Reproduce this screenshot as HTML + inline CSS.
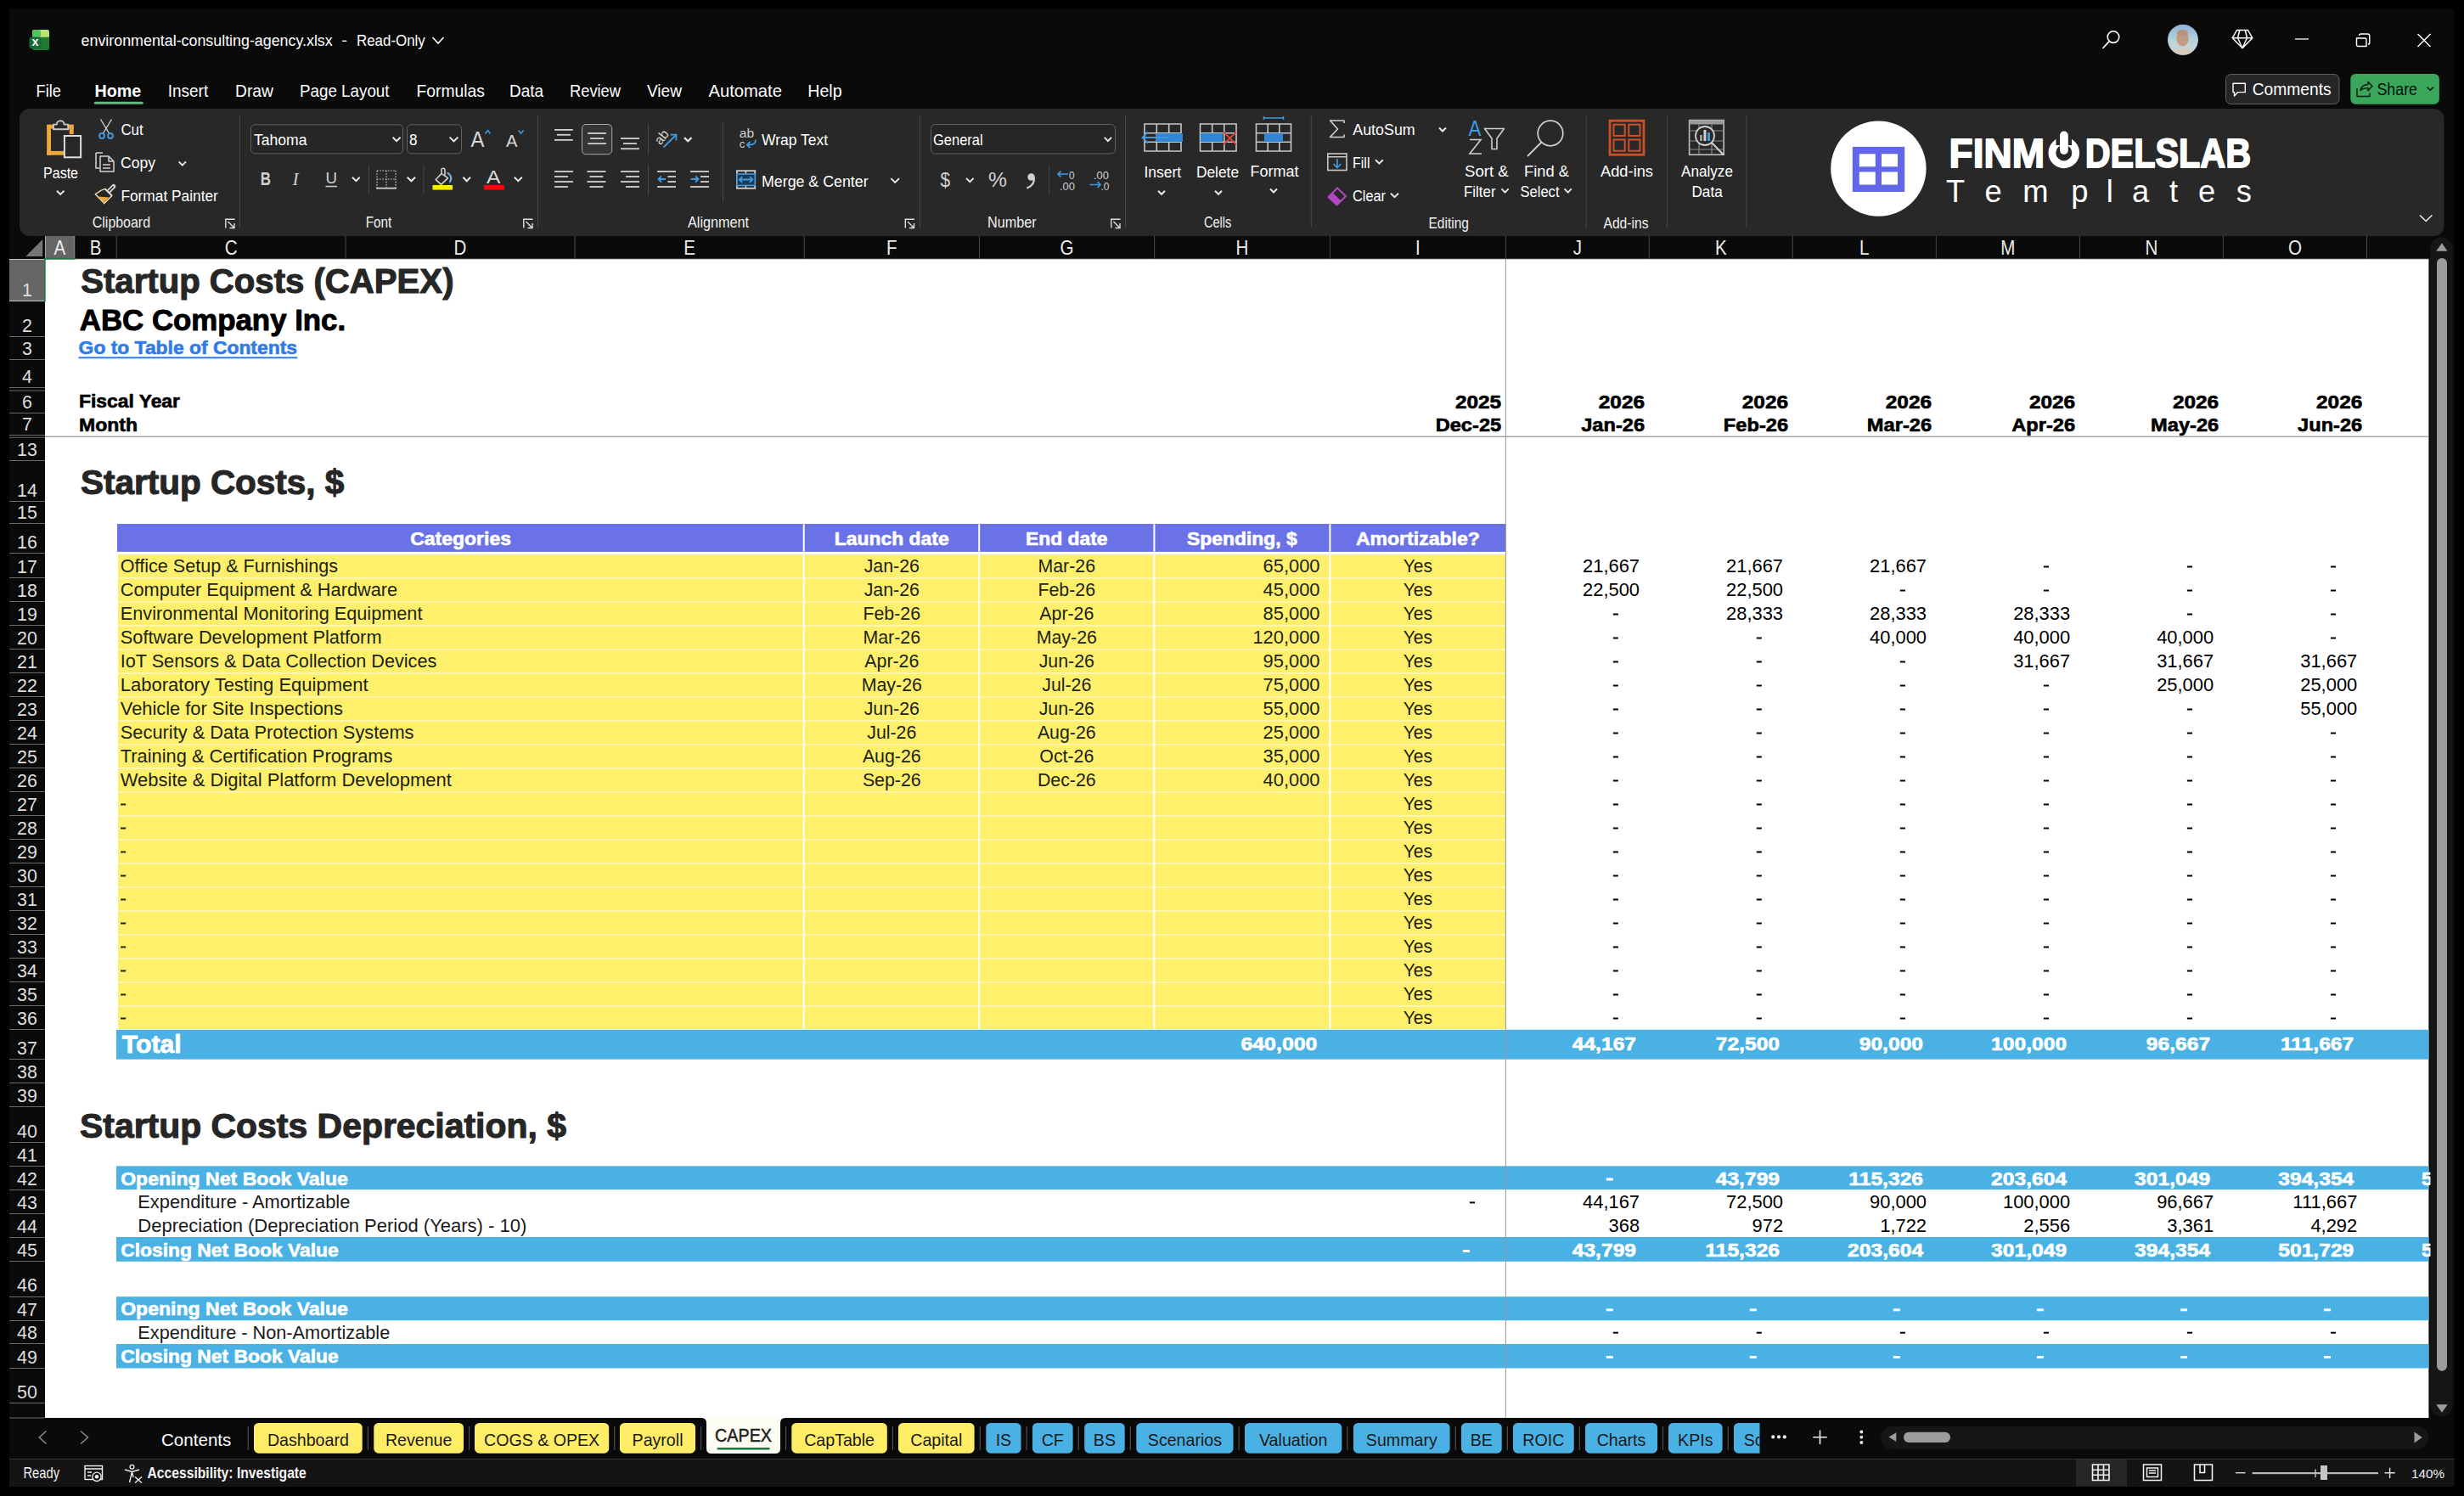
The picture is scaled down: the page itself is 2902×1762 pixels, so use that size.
<!DOCTYPE html><html><head><meta charset="utf-8"><title>CAPEX</title><style>html,body{margin:0;padding:0;background:#000;overflow:hidden}svg{display:block}</style></head><body><svg width="2902" height="1762" viewBox="0 0 2902 1762" font-family="Liberation Sans, sans-serif">
<rect x="0.00" y="0.00" width="2902.00" height="1762.00" fill="#000"/>
<rect x="11.00" y="11.00" width="2879.50" height="1740.00" fill="#0a0a0a"/>
<rect x="53.00" y="305.00" width="2807.40" height="1365.00" fill="#fff"/>
<text x="95.20" y="345.00" font-size="40.41" font-weight="bold" fill="#262626" textLength="439.33" lengthAdjust="spacingAndGlyphs" stroke="#262626" stroke-width="1.13" stroke-linejoin="round">Startup Costs (CAPEX)</text>
<text x="93.80" y="388.70" font-size="35.17" font-weight="bold" fill="#000" textLength="313.34" lengthAdjust="spacingAndGlyphs" stroke="#000" stroke-width="0.98" stroke-linejoin="round">ABC Company Inc.</text>
<text x="92.60" y="417.30" font-size="22.09" font-weight="bold" fill="#2f7be8" textLength="257.37" lengthAdjust="spacingAndGlyphs" stroke="#2f7be8" stroke-width="0.62" stroke-linejoin="round">Go to Table of Contents</text>
<rect x="92.60" y="420.30" width="257.60" height="2.00" fill="#2f7be8"/>
<text x="93.00" y="480.20" font-size="22.09" font-weight="bold" fill="#000" textLength="118.96" lengthAdjust="spacingAndGlyphs" stroke="#000" stroke-width="0.62" stroke-linejoin="round">Fiscal Year</text>
<text x="93.00" y="508.40" font-size="22.09" font-weight="bold" fill="#000" textLength="68.97" lengthAdjust="spacingAndGlyphs" stroke="#000" stroke-width="0.62" stroke-linejoin="round">Month</text>
<text x="1768.19" y="480.60" font-size="22.09" font-weight="bold" fill="#000" text-anchor="end" textLength="54.29" lengthAdjust="spacingAndGlyphs" stroke="#000" stroke-width="0.62" stroke-linejoin="round">2025</text>
<text x="1768.20" y="508.40" font-size="22.09" font-weight="bold" fill="#000" text-anchor="end" textLength="77.54" lengthAdjust="spacingAndGlyphs" stroke="#000" stroke-width="0.62" stroke-linejoin="round">Dec-25</text>
<text x="1937.09" y="480.60" font-size="22.09" font-weight="bold" fill="#000" text-anchor="end" textLength="54.29" lengthAdjust="spacingAndGlyphs" stroke="#000" stroke-width="0.62" stroke-linejoin="round">2026</text>
<text x="1937.07" y="508.40" font-size="22.09" font-weight="bold" fill="#000" text-anchor="end" textLength="74.90" lengthAdjust="spacingAndGlyphs" stroke="#000" stroke-width="0.62" stroke-linejoin="round">Jan-26</text>
<text x="2106.09" y="480.60" font-size="22.09" font-weight="bold" fill="#000" text-anchor="end" textLength="54.29" lengthAdjust="spacingAndGlyphs" stroke="#000" stroke-width="0.62" stroke-linejoin="round">2026</text>
<text x="2106.06" y="508.40" font-size="22.09" font-weight="bold" fill="#000" text-anchor="end" textLength="76.20" lengthAdjust="spacingAndGlyphs" stroke="#000" stroke-width="0.62" stroke-linejoin="round">Feb-26</text>
<text x="2275.09" y="480.60" font-size="22.09" font-weight="bold" fill="#000" text-anchor="end" textLength="54.29" lengthAdjust="spacingAndGlyphs" stroke="#000" stroke-width="0.62" stroke-linejoin="round">2026</text>
<text x="2275.07" y="508.40" font-size="22.09" font-weight="bold" fill="#000" text-anchor="end" textLength="76.21" lengthAdjust="spacingAndGlyphs" stroke="#000" stroke-width="0.62" stroke-linejoin="round">Mar-26</text>
<text x="2444.19" y="480.60" font-size="22.09" font-weight="bold" fill="#000" text-anchor="end" textLength="54.29" lengthAdjust="spacingAndGlyphs" stroke="#000" stroke-width="0.62" stroke-linejoin="round">2026</text>
<text x="2444.14" y="508.40" font-size="22.09" font-weight="bold" fill="#000" text-anchor="end" textLength="74.88" lengthAdjust="spacingAndGlyphs" stroke="#000" stroke-width="0.62" stroke-linejoin="round">Apr-26</text>
<text x="2613.19" y="480.60" font-size="22.09" font-weight="bold" fill="#000" text-anchor="end" textLength="54.29" lengthAdjust="spacingAndGlyphs" stroke="#000" stroke-width="0.62" stroke-linejoin="round">2026</text>
<text x="2613.22" y="508.40" font-size="22.09" font-weight="bold" fill="#000" text-anchor="end" textLength="80.16" lengthAdjust="spacingAndGlyphs" stroke="#000" stroke-width="0.62" stroke-linejoin="round">May-26</text>
<text x="2782.29" y="480.60" font-size="22.09" font-weight="bold" fill="#000" text-anchor="end" textLength="54.29" lengthAdjust="spacingAndGlyphs" stroke="#000" stroke-width="0.62" stroke-linejoin="round">2026</text>
<text x="2782.26" y="508.40" font-size="22.09" font-weight="bold" fill="#000" text-anchor="end" textLength="76.20" lengthAdjust="spacingAndGlyphs" stroke="#000" stroke-width="0.62" stroke-linejoin="round">Jun-26</text>
<rect x="53.00" y="513.60" width="2807.40" height="1.30" fill="#9a9a9a"/>
<text x="95.00" y="582.30" font-size="40.41" font-weight="bold" fill="#262626" textLength="310.33" lengthAdjust="spacingAndGlyphs" stroke="#262626" stroke-width="1.13" stroke-linejoin="round">Startup Costs, $</text>
<rect x="138.00" y="617.00" width="1635.40" height="32.90" fill="#6b72e6"/>
<rect x="945.70" y="617.20" width="2.00" height="32.60" fill="#fff"/>
<rect x="1152.20" y="617.20" width="2.00" height="32.60" fill="#fff"/>
<rect x="1358.40" y="617.20" width="2.00" height="32.60" fill="#fff"/>
<rect x="1565.40" y="617.20" width="2.00" height="32.60" fill="#fff"/>
<text x="483.20" y="641.60" font-size="21.80" font-weight="bold" fill="#fff" textLength="118.77" lengthAdjust="spacingAndGlyphs" stroke="#fff" stroke-width="0.61" stroke-linejoin="round">Categories</text>
<text x="982.88" y="641.60" font-size="21.80" font-weight="bold" fill="#fff" textLength="134.83" lengthAdjust="spacingAndGlyphs" stroke="#fff" stroke-width="0.61" stroke-linejoin="round">Launch date</text>
<text x="1207.94" y="641.60" font-size="21.80" font-weight="bold" fill="#fff" textLength="96.67" lengthAdjust="spacingAndGlyphs" stroke="#fff" stroke-width="0.61" stroke-linejoin="round">End date</text>
<text x="1398.06" y="641.60" font-size="21.80" font-weight="bold" fill="#fff" textLength="129.73" lengthAdjust="spacingAndGlyphs" stroke="#fff" stroke-width="0.61" stroke-linejoin="round">Spending, $</text>
<text x="1596.90" y="641.60" font-size="21.80" font-weight="bold" fill="#fff" textLength="145.98" lengthAdjust="spacingAndGlyphs" stroke="#fff" stroke-width="0.61" stroke-linejoin="round">Amortizable?</text>
<rect x="139.00" y="653.00" width="1634.40" height="559.00" fill="#fff06b"/>
<rect x="139.00" y="680.30" width="1634.40" height="1.40" fill="#fff8c4"/>
<rect x="139.00" y="708.30" width="1634.40" height="1.40" fill="#fff8c4"/>
<rect x="139.00" y="736.30" width="1634.40" height="1.40" fill="#fff8c4"/>
<rect x="139.00" y="764.30" width="1634.40" height="1.40" fill="#fff8c4"/>
<rect x="139.00" y="792.30" width="1634.40" height="1.40" fill="#fff8c4"/>
<rect x="139.00" y="820.30" width="1634.40" height="1.40" fill="#fff8c4"/>
<rect x="139.00" y="848.30" width="1634.40" height="1.40" fill="#fff8c4"/>
<rect x="139.00" y="876.30" width="1634.40" height="1.40" fill="#fff8c4"/>
<rect x="139.00" y="904.30" width="1634.40" height="1.40" fill="#fff8c4"/>
<rect x="139.00" y="932.30" width="1634.40" height="1.40" fill="#fff8c4"/>
<rect x="139.00" y="960.30" width="1634.40" height="1.40" fill="#fff8c4"/>
<rect x="139.00" y="988.30" width="1634.40" height="1.40" fill="#fff8c4"/>
<rect x="139.00" y="1016.30" width="1634.40" height="1.40" fill="#fff8c4"/>
<rect x="139.00" y="1044.30" width="1634.40" height="1.40" fill="#fff8c4"/>
<rect x="139.00" y="1072.30" width="1634.40" height="1.40" fill="#fff8c4"/>
<rect x="139.00" y="1100.30" width="1634.40" height="1.40" fill="#fff8c4"/>
<rect x="139.00" y="1128.30" width="1634.40" height="1.40" fill="#fff8c4"/>
<rect x="139.00" y="1156.30" width="1634.40" height="1.40" fill="#fff8c4"/>
<rect x="139.00" y="1184.30" width="1634.40" height="1.40" fill="#fff8c4"/>
<rect x="945.70" y="653.00" width="2.00" height="559.00" fill="#fff"/>
<rect x="1152.20" y="653.00" width="2.00" height="559.00" fill="#fff"/>
<rect x="1358.40" y="653.00" width="2.00" height="559.00" fill="#fff"/>
<rect x="1565.40" y="653.00" width="2.00" height="559.00" fill="#fff"/>
<text x="141.80" y="673.80" font-size="22.09" fill="#1c2418" textLength="256.34" lengthAdjust="spacingAndGlyphs">Office Setup &amp; Furnishings</text>
<text x="1017.65" y="673.80" font-size="22.09" fill="#1c2418" textLength="65.26" lengthAdjust="spacingAndGlyphs">Jan-26</text>
<text x="1222.47" y="673.80" font-size="22.09" fill="#1c2418" textLength="67.60" lengthAdjust="spacingAndGlyphs">Mar-26</text>
<text x="1554.47" y="673.80" font-size="22.09" fill="#1c2418" text-anchor="end" textLength="66.90" lengthAdjust="spacingAndGlyphs">65,000</text>
<text x="1652.75" y="673.80" font-size="22.09" fill="#1c2418" textLength="34.33" lengthAdjust="spacingAndGlyphs">Yes</text>
<text x="141.80" y="701.80" font-size="22.09" fill="#1c2418" textLength="326.35" lengthAdjust="spacingAndGlyphs">Computer Equipment &amp; Hardware</text>
<text x="1017.65" y="701.80" font-size="22.09" fill="#1c2418" textLength="65.26" lengthAdjust="spacingAndGlyphs">Jan-26</text>
<text x="1222.47" y="701.80" font-size="22.09" fill="#1c2418" textLength="67.62" lengthAdjust="spacingAndGlyphs">Feb-26</text>
<text x="1554.47" y="701.80" font-size="22.09" fill="#1c2418" text-anchor="end" textLength="66.90" lengthAdjust="spacingAndGlyphs">45,000</text>
<text x="1652.75" y="701.80" font-size="22.09" fill="#1c2418" textLength="34.33" lengthAdjust="spacingAndGlyphs">Yes</text>
<text x="141.80" y="729.80" font-size="22.09" fill="#1c2418" textLength="355.66" lengthAdjust="spacingAndGlyphs">Environmental Monitoring Equipment</text>
<text x="1016.47" y="729.80" font-size="22.09" fill="#1c2418" textLength="67.62" lengthAdjust="spacingAndGlyphs">Feb-26</text>
<text x="1224.29" y="729.80" font-size="22.09" fill="#1c2418" textLength="64.06" lengthAdjust="spacingAndGlyphs">Apr-26</text>
<text x="1554.47" y="729.80" font-size="22.09" fill="#1c2418" text-anchor="end" textLength="66.90" lengthAdjust="spacingAndGlyphs">85,000</text>
<text x="1652.75" y="729.80" font-size="22.09" fill="#1c2418" textLength="34.33" lengthAdjust="spacingAndGlyphs">Yes</text>
<text x="141.80" y="757.80" font-size="22.09" fill="#1c2418" textLength="307.75" lengthAdjust="spacingAndGlyphs">Software Development Platform</text>
<text x="1016.47" y="757.80" font-size="22.09" fill="#1c2418" textLength="67.60" lengthAdjust="spacingAndGlyphs">Mar-26</text>
<text x="1220.71" y="757.80" font-size="22.09" fill="#1c2418" textLength="71.17" lengthAdjust="spacingAndGlyphs">May-26</text>
<text x="1554.50" y="757.80" font-size="22.09" fill="#1c2418" text-anchor="end" textLength="79.06" lengthAdjust="spacingAndGlyphs">120,000</text>
<text x="1652.75" y="757.80" font-size="22.09" fill="#1c2418" textLength="34.33" lengthAdjust="spacingAndGlyphs">Yes</text>
<text x="141.80" y="785.80" font-size="22.09" fill="#1c2418" textLength="372.44" lengthAdjust="spacingAndGlyphs">IoT Sensors &amp; Data Collection Devices</text>
<text x="1018.29" y="785.80" font-size="22.09" fill="#1c2418" textLength="64.06" lengthAdjust="spacingAndGlyphs">Apr-26</text>
<text x="1223.65" y="785.80" font-size="22.09" fill="#1c2418" textLength="65.26" lengthAdjust="spacingAndGlyphs">Jun-26</text>
<text x="1554.47" y="785.80" font-size="22.09" fill="#1c2418" text-anchor="end" textLength="66.90" lengthAdjust="spacingAndGlyphs">95,000</text>
<text x="1652.75" y="785.80" font-size="22.09" fill="#1c2418" textLength="34.33" lengthAdjust="spacingAndGlyphs">Yes</text>
<text x="141.80" y="813.80" font-size="22.09" fill="#1c2418" textLength="291.76" lengthAdjust="spacingAndGlyphs">Laboratory Testing Equipment</text>
<text x="1014.71" y="813.80" font-size="22.09" fill="#1c2418" textLength="71.17" lengthAdjust="spacingAndGlyphs">May-26</text>
<text x="1227.22" y="813.80" font-size="22.09" fill="#1c2418" textLength="58.13" lengthAdjust="spacingAndGlyphs">Jul-26</text>
<text x="1554.47" y="813.80" font-size="22.09" fill="#1c2418" text-anchor="end" textLength="66.90" lengthAdjust="spacingAndGlyphs">75,000</text>
<text x="1652.75" y="813.80" font-size="22.09" fill="#1c2418" textLength="34.33" lengthAdjust="spacingAndGlyphs">Yes</text>
<text x="141.80" y="841.80" font-size="22.09" fill="#1c2418" textLength="262.09" lengthAdjust="spacingAndGlyphs">Vehicle for Site Inspections</text>
<text x="1017.65" y="841.80" font-size="22.09" fill="#1c2418" textLength="65.26" lengthAdjust="spacingAndGlyphs">Jun-26</text>
<text x="1223.65" y="841.80" font-size="22.09" fill="#1c2418" textLength="65.26" lengthAdjust="spacingAndGlyphs">Jun-26</text>
<text x="1554.47" y="841.80" font-size="22.09" fill="#1c2418" text-anchor="end" textLength="66.90" lengthAdjust="spacingAndGlyphs">55,000</text>
<text x="1652.75" y="841.80" font-size="22.09" fill="#1c2418" textLength="34.33" lengthAdjust="spacingAndGlyphs">Yes</text>
<text x="141.80" y="869.80" font-size="22.09" fill="#1c2418" textLength="345.75" lengthAdjust="spacingAndGlyphs">Security &amp; Data Protection Systems</text>
<text x="1021.22" y="869.80" font-size="22.09" fill="#1c2418" textLength="58.13" lengthAdjust="spacingAndGlyphs">Jul-26</text>
<text x="1221.89" y="869.80" font-size="22.09" fill="#1c2418" textLength="68.82" lengthAdjust="spacingAndGlyphs">Aug-26</text>
<text x="1554.47" y="869.80" font-size="22.09" fill="#1c2418" text-anchor="end" textLength="66.90" lengthAdjust="spacingAndGlyphs">25,000</text>
<text x="1652.75" y="869.80" font-size="22.09" fill="#1c2418" textLength="34.33" lengthAdjust="spacingAndGlyphs">Yes</text>
<text x="141.80" y="897.80" font-size="22.09" fill="#1c2418" textLength="320.67" lengthAdjust="spacingAndGlyphs">Training &amp; Certification Programs</text>
<text x="1015.89" y="897.80" font-size="22.09" fill="#1c2418" textLength="68.82" lengthAdjust="spacingAndGlyphs">Aug-26</text>
<text x="1224.29" y="897.80" font-size="22.09" fill="#1c2418" textLength="64.05" lengthAdjust="spacingAndGlyphs">Oct-26</text>
<text x="1554.47" y="897.80" font-size="22.09" fill="#1c2418" text-anchor="end" textLength="66.90" lengthAdjust="spacingAndGlyphs">35,000</text>
<text x="1652.75" y="897.80" font-size="22.09" fill="#1c2418" textLength="34.33" lengthAdjust="spacingAndGlyphs">Yes</text>
<text x="141.80" y="925.80" font-size="22.09" fill="#1c2418" textLength="390.04" lengthAdjust="spacingAndGlyphs">Website &amp; Digital Platform Development</text>
<text x="1015.89" y="925.80" font-size="22.09" fill="#1c2418" textLength="68.82" lengthAdjust="spacingAndGlyphs">Sep-26</text>
<text x="1221.89" y="925.80" font-size="22.09" fill="#1c2418" textLength="68.80" lengthAdjust="spacingAndGlyphs">Dec-26</text>
<text x="1554.47" y="925.80" font-size="22.09" fill="#1c2418" text-anchor="end" textLength="66.90" lengthAdjust="spacingAndGlyphs">40,000</text>
<text x="1652.75" y="925.80" font-size="22.09" fill="#1c2418" textLength="34.33" lengthAdjust="spacingAndGlyphs">Yes</text>
<rect x="142.00" y="946.50" width="6.20" height="2.00" fill="#1c2418"/>
<text x="1652.75" y="953.80" font-size="22.09" fill="#1c2418" textLength="34.33" lengthAdjust="spacingAndGlyphs">Yes</text>
<rect x="142.00" y="974.50" width="6.20" height="2.00" fill="#1c2418"/>
<text x="1652.75" y="981.80" font-size="22.09" fill="#1c2418" textLength="34.33" lengthAdjust="spacingAndGlyphs">Yes</text>
<rect x="142.00" y="1002.50" width="6.20" height="2.00" fill="#1c2418"/>
<text x="1652.75" y="1009.80" font-size="22.09" fill="#1c2418" textLength="34.33" lengthAdjust="spacingAndGlyphs">Yes</text>
<rect x="142.00" y="1030.50" width="6.20" height="2.00" fill="#1c2418"/>
<text x="1652.75" y="1037.80" font-size="22.09" fill="#1c2418" textLength="34.33" lengthAdjust="spacingAndGlyphs">Yes</text>
<rect x="142.00" y="1058.50" width="6.20" height="2.00" fill="#1c2418"/>
<text x="1652.75" y="1065.80" font-size="22.09" fill="#1c2418" textLength="34.33" lengthAdjust="spacingAndGlyphs">Yes</text>
<rect x="142.00" y="1086.50" width="6.20" height="2.00" fill="#1c2418"/>
<text x="1652.75" y="1093.80" font-size="22.09" fill="#1c2418" textLength="34.33" lengthAdjust="spacingAndGlyphs">Yes</text>
<rect x="142.00" y="1114.50" width="6.20" height="2.00" fill="#1c2418"/>
<text x="1652.75" y="1121.80" font-size="22.09" fill="#1c2418" textLength="34.33" lengthAdjust="spacingAndGlyphs">Yes</text>
<rect x="142.00" y="1142.50" width="6.20" height="2.00" fill="#1c2418"/>
<text x="1652.75" y="1149.80" font-size="22.09" fill="#1c2418" textLength="34.33" lengthAdjust="spacingAndGlyphs">Yes</text>
<rect x="142.00" y="1170.50" width="6.20" height="2.00" fill="#1c2418"/>
<text x="1652.75" y="1177.80" font-size="22.09" fill="#1c2418" textLength="34.33" lengthAdjust="spacingAndGlyphs">Yes</text>
<rect x="142.00" y="1198.50" width="6.20" height="2.00" fill="#1c2418"/>
<text x="1652.75" y="1205.80" font-size="22.09" fill="#1c2418" textLength="34.33" lengthAdjust="spacingAndGlyphs">Yes</text>
<text x="1931.07" y="673.80" font-size="22.09" fill="#000" text-anchor="end" textLength="67.03" lengthAdjust="spacingAndGlyphs">21,667</text>
<text x="2100.07" y="673.80" font-size="22.09" fill="#000" text-anchor="end" textLength="67.03" lengthAdjust="spacingAndGlyphs">21,667</text>
<text x="2269.07" y="673.80" font-size="22.09" fill="#000" text-anchor="end" textLength="67.03" lengthAdjust="spacingAndGlyphs">21,667</text>
<rect x="2406.90" y="666.50" width="6.10" height="2.00" fill="#000"/>
<rect x="2575.90" y="666.50" width="6.10" height="2.00" fill="#000"/>
<rect x="2745.00" y="666.50" width="6.10" height="2.00" fill="#000"/>
<text x="1931.07" y="701.80" font-size="22.09" fill="#000" text-anchor="end" textLength="67.03" lengthAdjust="spacingAndGlyphs">22,500</text>
<text x="2100.07" y="701.80" font-size="22.09" fill="#000" text-anchor="end" textLength="67.03" lengthAdjust="spacingAndGlyphs">22,500</text>
<rect x="2237.80" y="694.50" width="6.10" height="2.00" fill="#000"/>
<rect x="2406.90" y="694.50" width="6.10" height="2.00" fill="#000"/>
<rect x="2575.90" y="694.50" width="6.10" height="2.00" fill="#000"/>
<rect x="2745.00" y="694.50" width="6.10" height="2.00" fill="#000"/>
<rect x="1899.80" y="722.50" width="6.10" height="2.00" fill="#000"/>
<text x="2100.07" y="729.80" font-size="22.09" fill="#000" text-anchor="end" textLength="67.03" lengthAdjust="spacingAndGlyphs">28,333</text>
<text x="2269.07" y="729.80" font-size="22.09" fill="#000" text-anchor="end" textLength="67.03" lengthAdjust="spacingAndGlyphs">28,333</text>
<text x="2438.17" y="729.80" font-size="22.09" fill="#000" text-anchor="end" textLength="67.03" lengthAdjust="spacingAndGlyphs">28,333</text>
<rect x="2575.90" y="722.50" width="6.10" height="2.00" fill="#000"/>
<rect x="2745.00" y="722.50" width="6.10" height="2.00" fill="#000"/>
<rect x="1899.80" y="750.50" width="6.10" height="2.00" fill="#000"/>
<rect x="2068.80" y="750.50" width="6.10" height="2.00" fill="#000"/>
<text x="2269.07" y="757.80" font-size="22.09" fill="#000" text-anchor="end" textLength="67.03" lengthAdjust="spacingAndGlyphs">40,000</text>
<text x="2438.17" y="757.80" font-size="22.09" fill="#000" text-anchor="end" textLength="67.03" lengthAdjust="spacingAndGlyphs">40,000</text>
<text x="2607.17" y="757.80" font-size="22.09" fill="#000" text-anchor="end" textLength="67.03" lengthAdjust="spacingAndGlyphs">40,000</text>
<rect x="2745.00" y="750.50" width="6.10" height="2.00" fill="#000"/>
<rect x="1899.80" y="778.50" width="6.10" height="2.00" fill="#000"/>
<rect x="2068.80" y="778.50" width="6.10" height="2.00" fill="#000"/>
<rect x="2237.80" y="778.50" width="6.10" height="2.00" fill="#000"/>
<text x="2438.17" y="785.80" font-size="22.09" fill="#000" text-anchor="end" textLength="67.03" lengthAdjust="spacingAndGlyphs">31,667</text>
<text x="2607.17" y="785.80" font-size="22.09" fill="#000" text-anchor="end" textLength="67.03" lengthAdjust="spacingAndGlyphs">31,667</text>
<text x="2776.27" y="785.80" font-size="22.09" fill="#000" text-anchor="end" textLength="67.03" lengthAdjust="spacingAndGlyphs">31,667</text>
<rect x="1899.80" y="806.50" width="6.10" height="2.00" fill="#000"/>
<rect x="2068.80" y="806.50" width="6.10" height="2.00" fill="#000"/>
<rect x="2237.80" y="806.50" width="6.10" height="2.00" fill="#000"/>
<rect x="2406.90" y="806.50" width="6.10" height="2.00" fill="#000"/>
<text x="2607.17" y="813.80" font-size="22.09" fill="#000" text-anchor="end" textLength="67.03" lengthAdjust="spacingAndGlyphs">25,000</text>
<text x="2776.27" y="813.80" font-size="22.09" fill="#000" text-anchor="end" textLength="67.03" lengthAdjust="spacingAndGlyphs">25,000</text>
<rect x="1899.80" y="834.50" width="6.10" height="2.00" fill="#000"/>
<rect x="2068.80" y="834.50" width="6.10" height="2.00" fill="#000"/>
<rect x="2237.80" y="834.50" width="6.10" height="2.00" fill="#000"/>
<rect x="2406.90" y="834.50" width="6.10" height="2.00" fill="#000"/>
<rect x="2575.90" y="834.50" width="6.10" height="2.00" fill="#000"/>
<text x="2776.27" y="841.80" font-size="22.09" fill="#000" text-anchor="end" textLength="67.03" lengthAdjust="spacingAndGlyphs">55,000</text>
<rect x="1899.80" y="862.50" width="6.10" height="2.00" fill="#000"/>
<rect x="2068.80" y="862.50" width="6.10" height="2.00" fill="#000"/>
<rect x="2237.80" y="862.50" width="6.10" height="2.00" fill="#000"/>
<rect x="2406.90" y="862.50" width="6.10" height="2.00" fill="#000"/>
<rect x="2575.90" y="862.50" width="6.10" height="2.00" fill="#000"/>
<rect x="2745.00" y="862.50" width="6.10" height="2.00" fill="#000"/>
<rect x="1899.80" y="890.50" width="6.10" height="2.00" fill="#000"/>
<rect x="2068.80" y="890.50" width="6.10" height="2.00" fill="#000"/>
<rect x="2237.80" y="890.50" width="6.10" height="2.00" fill="#000"/>
<rect x="2406.90" y="890.50" width="6.10" height="2.00" fill="#000"/>
<rect x="2575.90" y="890.50" width="6.10" height="2.00" fill="#000"/>
<rect x="2745.00" y="890.50" width="6.10" height="2.00" fill="#000"/>
<rect x="1899.80" y="918.50" width="6.10" height="2.00" fill="#000"/>
<rect x="2068.80" y="918.50" width="6.10" height="2.00" fill="#000"/>
<rect x="2237.80" y="918.50" width="6.10" height="2.00" fill="#000"/>
<rect x="2406.90" y="918.50" width="6.10" height="2.00" fill="#000"/>
<rect x="2575.90" y="918.50" width="6.10" height="2.00" fill="#000"/>
<rect x="2745.00" y="918.50" width="6.10" height="2.00" fill="#000"/>
<rect x="1899.80" y="946.50" width="6.10" height="2.00" fill="#000"/>
<rect x="2068.80" y="946.50" width="6.10" height="2.00" fill="#000"/>
<rect x="2237.80" y="946.50" width="6.10" height="2.00" fill="#000"/>
<rect x="2406.90" y="946.50" width="6.10" height="2.00" fill="#000"/>
<rect x="2575.90" y="946.50" width="6.10" height="2.00" fill="#000"/>
<rect x="2745.00" y="946.50" width="6.10" height="2.00" fill="#000"/>
<rect x="1899.80" y="974.50" width="6.10" height="2.00" fill="#000"/>
<rect x="2068.80" y="974.50" width="6.10" height="2.00" fill="#000"/>
<rect x="2237.80" y="974.50" width="6.10" height="2.00" fill="#000"/>
<rect x="2406.90" y="974.50" width="6.10" height="2.00" fill="#000"/>
<rect x="2575.90" y="974.50" width="6.10" height="2.00" fill="#000"/>
<rect x="2745.00" y="974.50" width="6.10" height="2.00" fill="#000"/>
<rect x="1899.80" y="1002.50" width="6.10" height="2.00" fill="#000"/>
<rect x="2068.80" y="1002.50" width="6.10" height="2.00" fill="#000"/>
<rect x="2237.80" y="1002.50" width="6.10" height="2.00" fill="#000"/>
<rect x="2406.90" y="1002.50" width="6.10" height="2.00" fill="#000"/>
<rect x="2575.90" y="1002.50" width="6.10" height="2.00" fill="#000"/>
<rect x="2745.00" y="1002.50" width="6.10" height="2.00" fill="#000"/>
<rect x="1899.80" y="1030.50" width="6.10" height="2.00" fill="#000"/>
<rect x="2068.80" y="1030.50" width="6.10" height="2.00" fill="#000"/>
<rect x="2237.80" y="1030.50" width="6.10" height="2.00" fill="#000"/>
<rect x="2406.90" y="1030.50" width="6.10" height="2.00" fill="#000"/>
<rect x="2575.90" y="1030.50" width="6.10" height="2.00" fill="#000"/>
<rect x="2745.00" y="1030.50" width="6.10" height="2.00" fill="#000"/>
<rect x="1899.80" y="1058.50" width="6.10" height="2.00" fill="#000"/>
<rect x="2068.80" y="1058.50" width="6.10" height="2.00" fill="#000"/>
<rect x="2237.80" y="1058.50" width="6.10" height="2.00" fill="#000"/>
<rect x="2406.90" y="1058.50" width="6.10" height="2.00" fill="#000"/>
<rect x="2575.90" y="1058.50" width="6.10" height="2.00" fill="#000"/>
<rect x="2745.00" y="1058.50" width="6.10" height="2.00" fill="#000"/>
<rect x="1899.80" y="1086.50" width="6.10" height="2.00" fill="#000"/>
<rect x="2068.80" y="1086.50" width="6.10" height="2.00" fill="#000"/>
<rect x="2237.80" y="1086.50" width="6.10" height="2.00" fill="#000"/>
<rect x="2406.90" y="1086.50" width="6.10" height="2.00" fill="#000"/>
<rect x="2575.90" y="1086.50" width="6.10" height="2.00" fill="#000"/>
<rect x="2745.00" y="1086.50" width="6.10" height="2.00" fill="#000"/>
<rect x="1899.80" y="1114.50" width="6.10" height="2.00" fill="#000"/>
<rect x="2068.80" y="1114.50" width="6.10" height="2.00" fill="#000"/>
<rect x="2237.80" y="1114.50" width="6.10" height="2.00" fill="#000"/>
<rect x="2406.90" y="1114.50" width="6.10" height="2.00" fill="#000"/>
<rect x="2575.90" y="1114.50" width="6.10" height="2.00" fill="#000"/>
<rect x="2745.00" y="1114.50" width="6.10" height="2.00" fill="#000"/>
<rect x="1899.80" y="1142.50" width="6.10" height="2.00" fill="#000"/>
<rect x="2068.80" y="1142.50" width="6.10" height="2.00" fill="#000"/>
<rect x="2237.80" y="1142.50" width="6.10" height="2.00" fill="#000"/>
<rect x="2406.90" y="1142.50" width="6.10" height="2.00" fill="#000"/>
<rect x="2575.90" y="1142.50" width="6.10" height="2.00" fill="#000"/>
<rect x="2745.00" y="1142.50" width="6.10" height="2.00" fill="#000"/>
<rect x="1899.80" y="1170.50" width="6.10" height="2.00" fill="#000"/>
<rect x="2068.80" y="1170.50" width="6.10" height="2.00" fill="#000"/>
<rect x="2237.80" y="1170.50" width="6.10" height="2.00" fill="#000"/>
<rect x="2406.90" y="1170.50" width="6.10" height="2.00" fill="#000"/>
<rect x="2575.90" y="1170.50" width="6.10" height="2.00" fill="#000"/>
<rect x="2745.00" y="1170.50" width="6.10" height="2.00" fill="#000"/>
<rect x="1899.80" y="1198.50" width="6.10" height="2.00" fill="#000"/>
<rect x="2068.80" y="1198.50" width="6.10" height="2.00" fill="#000"/>
<rect x="2237.80" y="1198.50" width="6.10" height="2.00" fill="#000"/>
<rect x="2406.90" y="1198.50" width="6.10" height="2.00" fill="#000"/>
<rect x="2575.90" y="1198.50" width="6.10" height="2.00" fill="#000"/>
<rect x="2745.00" y="1198.50" width="6.10" height="2.00" fill="#000"/>
<rect x="137.00" y="1212.80" width="2723.40" height="34.90" fill="#4ab1e5"/>
<text x="143.80" y="1239.70" font-size="28.78" font-weight="bold" fill="#fff" textLength="69.79" lengthAdjust="spacingAndGlyphs" stroke="#fff" stroke-width="0.81" stroke-linejoin="round">Total</text>
<text x="1551.50" y="1237.00" font-size="21.80" font-weight="bold" fill="#fff" text-anchor="end" textLength="90.10" lengthAdjust="spacingAndGlyphs" stroke="#fff" stroke-width="0.61" stroke-linejoin="round">640,000</text>
<text x="1927.07" y="1237.00" font-size="21.80" font-weight="bold" fill="#fff" text-anchor="end" textLength="75.36" lengthAdjust="spacingAndGlyphs" stroke="#fff" stroke-width="0.61" stroke-linejoin="round">44,167</text>
<text x="2096.07" y="1237.00" font-size="21.80" font-weight="bold" fill="#fff" text-anchor="end" textLength="75.36" lengthAdjust="spacingAndGlyphs" stroke="#fff" stroke-width="0.61" stroke-linejoin="round">72,500</text>
<text x="2265.07" y="1237.00" font-size="21.80" font-weight="bold" fill="#fff" text-anchor="end" textLength="75.36" lengthAdjust="spacingAndGlyphs" stroke="#fff" stroke-width="0.61" stroke-linejoin="round">90,000</text>
<text x="2434.20" y="1237.00" font-size="21.80" font-weight="bold" fill="#fff" text-anchor="end" textLength="89.06" lengthAdjust="spacingAndGlyphs" stroke="#fff" stroke-width="0.61" stroke-linejoin="round">100,000</text>
<text x="2603.17" y="1237.00" font-size="21.80" font-weight="bold" fill="#fff" text-anchor="end" textLength="75.36" lengthAdjust="spacingAndGlyphs" stroke="#fff" stroke-width="0.61" stroke-linejoin="round">96,667</text>
<text x="2772.29" y="1237.00" font-size="21.80" font-weight="bold" fill="#fff" text-anchor="end" textLength="86.34" lengthAdjust="spacingAndGlyphs" stroke="#fff" stroke-width="0.61" stroke-linejoin="round">111,667</text>
<text x="94.00" y="1340.00" font-size="40.41" font-weight="bold" fill="#262626" textLength="572.93" lengthAdjust="spacingAndGlyphs" stroke="#262626" stroke-width="1.13" stroke-linejoin="round">Startup Costs Depreciation, $</text>
<rect x="137.00" y="1373.40" width="2723.40" height="27.60" fill="#4ab1e5"/>
<rect x="137.00" y="1457.00" width="2723.40" height="28.80" fill="#4ab1e5"/>
<rect x="137.00" y="1527.20" width="2723.40" height="28.00" fill="#4ab1e5"/>
<rect x="137.00" y="1583.00" width="2723.40" height="28.50" fill="#4ab1e5"/>
<text x="142.20" y="1395.50" font-size="21.80" font-weight="bold" fill="#fff" textLength="267.75" lengthAdjust="spacingAndGlyphs" stroke="#fff" stroke-width="0.61" stroke-linejoin="round">Opening Net Book Value</text>
<rect x="1891.80" y="1387.50" width="8.00" height="3.00" fill="#fff"/>
<text x="2096.07" y="1395.50" font-size="21.80" font-weight="bold" fill="#fff" text-anchor="end" textLength="75.36" lengthAdjust="spacingAndGlyphs" stroke="#fff" stroke-width="0.61" stroke-linejoin="round">43,799</text>
<text x="2265.09" y="1395.50" font-size="21.80" font-weight="bold" fill="#fff" text-anchor="end" textLength="87.70" lengthAdjust="spacingAndGlyphs" stroke="#fff" stroke-width="0.61" stroke-linejoin="round">115,326</text>
<text x="2434.20" y="1395.50" font-size="21.80" font-weight="bold" fill="#fff" text-anchor="end" textLength="89.06" lengthAdjust="spacingAndGlyphs" stroke="#fff" stroke-width="0.61" stroke-linejoin="round">203,604</text>
<text x="2603.20" y="1395.50" font-size="21.80" font-weight="bold" fill="#fff" text-anchor="end" textLength="89.06" lengthAdjust="spacingAndGlyphs" stroke="#fff" stroke-width="0.61" stroke-linejoin="round">301,049</text>
<text x="2772.30" y="1395.50" font-size="21.80" font-weight="bold" fill="#fff" text-anchor="end" textLength="89.06" lengthAdjust="spacingAndGlyphs" stroke="#fff" stroke-width="0.61" stroke-linejoin="round">394,354</text>
<text x="2852.00" y="1395.50" font-size="21.80" font-weight="bold" fill="#fff" textLength="13.34" lengthAdjust="spacingAndGlyphs" stroke="#fff" stroke-width="0.61" stroke-linejoin="round">5</text>
<text x="162.30" y="1422.90" font-size="22.09" fill="#1a1a1a" textLength="250.01" lengthAdjust="spacingAndGlyphs">Expenditure - Amortizable</text>
<rect x="1730.90" y="1415.40" width="6.10" height="2.00" fill="#000"/>
<text x="1931.07" y="1422.70" font-size="22.09" fill="#000" text-anchor="end" textLength="67.03" lengthAdjust="spacingAndGlyphs">44,167</text>
<text x="2100.07" y="1422.70" font-size="22.09" fill="#000" text-anchor="end" textLength="67.03" lengthAdjust="spacingAndGlyphs">72,500</text>
<text x="2269.07" y="1422.70" font-size="22.09" fill="#000" text-anchor="end" textLength="67.03" lengthAdjust="spacingAndGlyphs">90,000</text>
<text x="2438.20" y="1422.70" font-size="22.09" fill="#000" text-anchor="end" textLength="79.22" lengthAdjust="spacingAndGlyphs">100,000</text>
<text x="2607.17" y="1422.70" font-size="22.09" fill="#000" text-anchor="end" textLength="67.03" lengthAdjust="spacingAndGlyphs">96,667</text>
<text x="2776.33" y="1422.70" font-size="22.09" fill="#000" text-anchor="end" textLength="75.97" lengthAdjust="spacingAndGlyphs">111,667</text>
<text x="162.30" y="1451.00" font-size="22.09" fill="#1a1a1a" textLength="458.04" lengthAdjust="spacingAndGlyphs">Depreciation (Depreciation Period (Years) - 10)</text>
<text x="1931.07" y="1451.00" font-size="22.09" fill="#000" text-anchor="end" textLength="36.57" lengthAdjust="spacingAndGlyphs">368</text>
<text x="2100.07" y="1451.00" font-size="22.09" fill="#000" text-anchor="end" textLength="36.57" lengthAdjust="spacingAndGlyphs">972</text>
<text x="2269.05" y="1451.00" font-size="22.09" fill="#000" text-anchor="end" textLength="54.85" lengthAdjust="spacingAndGlyphs">1,722</text>
<text x="2438.15" y="1451.00" font-size="22.09" fill="#000" text-anchor="end" textLength="54.85" lengthAdjust="spacingAndGlyphs">2,556</text>
<text x="2607.15" y="1451.00" font-size="22.09" fill="#000" text-anchor="end" textLength="54.85" lengthAdjust="spacingAndGlyphs">3,361</text>
<text x="2776.25" y="1451.00" font-size="22.09" fill="#000" text-anchor="end" textLength="54.85" lengthAdjust="spacingAndGlyphs">4,292</text>
<text x="142.20" y="1480.00" font-size="21.80" font-weight="bold" fill="#fff" textLength="256.49" lengthAdjust="spacingAndGlyphs" stroke="#fff" stroke-width="0.61" stroke-linejoin="round">Closing Net Book Value</text>
<rect x="1722.90" y="1472.00" width="8.00" height="3.00" fill="#fff"/>
<text x="1927.07" y="1480.00" font-size="21.80" font-weight="bold" fill="#fff" text-anchor="end" textLength="75.36" lengthAdjust="spacingAndGlyphs" stroke="#fff" stroke-width="0.61" stroke-linejoin="round">43,799</text>
<text x="2096.09" y="1480.00" font-size="21.80" font-weight="bold" fill="#fff" text-anchor="end" textLength="87.70" lengthAdjust="spacingAndGlyphs" stroke="#fff" stroke-width="0.61" stroke-linejoin="round">115,326</text>
<text x="2265.10" y="1480.00" font-size="21.80" font-weight="bold" fill="#fff" text-anchor="end" textLength="89.06" lengthAdjust="spacingAndGlyphs" stroke="#fff" stroke-width="0.61" stroke-linejoin="round">203,604</text>
<text x="2434.20" y="1480.00" font-size="21.80" font-weight="bold" fill="#fff" text-anchor="end" textLength="89.06" lengthAdjust="spacingAndGlyphs" stroke="#fff" stroke-width="0.61" stroke-linejoin="round">301,049</text>
<text x="2603.20" y="1480.00" font-size="21.80" font-weight="bold" fill="#fff" text-anchor="end" textLength="89.06" lengthAdjust="spacingAndGlyphs" stroke="#fff" stroke-width="0.61" stroke-linejoin="round">394,354</text>
<text x="2772.30" y="1480.00" font-size="21.80" font-weight="bold" fill="#fff" text-anchor="end" textLength="89.06" lengthAdjust="spacingAndGlyphs" stroke="#fff" stroke-width="0.61" stroke-linejoin="round">501,729</text>
<text x="2852.00" y="1480.00" font-size="21.80" font-weight="bold" fill="#fff" textLength="13.34" lengthAdjust="spacingAndGlyphs" stroke="#fff" stroke-width="0.61" stroke-linejoin="round">5</text>
<text x="142.20" y="1549.30" font-size="21.80" font-weight="bold" fill="#fff" textLength="267.75" lengthAdjust="spacingAndGlyphs" stroke="#fff" stroke-width="0.61" stroke-linejoin="round">Opening Net Book Value</text>
<rect x="1891.80" y="1541.30" width="8.00" height="3.00" fill="#fff"/>
<rect x="2060.80" y="1541.30" width="8.00" height="3.00" fill="#fff"/>
<rect x="2229.80" y="1541.30" width="8.00" height="3.00" fill="#fff"/>
<rect x="2398.90" y="1541.30" width="8.00" height="3.00" fill="#fff"/>
<rect x="2567.90" y="1541.30" width="8.00" height="3.00" fill="#fff"/>
<rect x="2737.00" y="1541.30" width="8.00" height="3.00" fill="#fff"/>
<text x="162.30" y="1576.50" font-size="22.09" fill="#1a1a1a" textLength="296.96" lengthAdjust="spacingAndGlyphs">Expenditure - Non-Amortizable</text>
<rect x="1899.80" y="1568.70" width="6.10" height="2.00" fill="#000"/>
<rect x="2068.80" y="1568.70" width="6.10" height="2.00" fill="#000"/>
<rect x="2237.80" y="1568.70" width="6.10" height="2.00" fill="#000"/>
<rect x="2406.90" y="1568.70" width="6.10" height="2.00" fill="#000"/>
<rect x="2575.90" y="1568.70" width="6.10" height="2.00" fill="#000"/>
<rect x="2745.00" y="1568.70" width="6.10" height="2.00" fill="#000"/>
<text x="142.20" y="1605.00" font-size="21.80" font-weight="bold" fill="#fff" textLength="256.49" lengthAdjust="spacingAndGlyphs" stroke="#fff" stroke-width="0.61" stroke-linejoin="round">Closing Net Book Value</text>
<rect x="1891.80" y="1597.00" width="8.00" height="3.00" fill="#fff"/>
<rect x="2060.80" y="1597.00" width="8.00" height="3.00" fill="#fff"/>
<rect x="2229.80" y="1597.00" width="8.00" height="3.00" fill="#fff"/>
<rect x="2398.90" y="1597.00" width="8.00" height="3.00" fill="#fff"/>
<rect x="2567.90" y="1597.00" width="8.00" height="3.00" fill="#fff"/>
<rect x="2737.00" y="1597.00" width="8.00" height="3.00" fill="#fff"/>
<rect x="1772.90" y="305.00" width="1.00" height="1365.00" fill="#9a9a9a"/>
<rect x="38.00" y="35.00" width="20.00" height="24.00" fill="#1f7a34" rx="2.5"/>
<rect x="38.00" y="35.00" width="20.00" height="8.50" fill="#b5e46f" rx="2.5"/>
<rect x="38.00" y="35.00" width="10.00" height="8.50" fill="#52c45a" rx="2.5"/>
<rect x="44.00" y="39.00" width="14.00" height="4.50" fill="#b5e46f"/>
<rect x="38.00" y="39.00" width="10.00" height="4.50" fill="#52c45a"/>
<rect x="34.50" y="43.50" width="14.00" height="13.50" fill="#17693a" rx="2.5"/>
<text x="37.50" y="53.80" font-size="15.00" font-weight="bold" fill="#fff" textLength="8.02" lengthAdjust="spacingAndGlyphs">x</text>
<text x="95.60" y="54.10" font-size="18.46" fill="#ffffff" textLength="296.12" lengthAdjust="spacingAndGlyphs">environmental-consulting-agency.xlsx</text>
<rect x="403.00" y="47.60" width="5.30" height="1.40" fill="#fff"/>
<text x="420.00" y="54.10" font-size="18.46" fill="#ffffff" textLength="80.80" lengthAdjust="spacingAndGlyphs">Read-Only</text>
<path d="M509.5,44 L516,51 L522.5,44" stroke="#fff" stroke-width="1.6" fill="none"/>
<circle cx="2489" cy="43.6" r="6.8" fill="none" stroke="#fff" stroke-width="1.6"/>
<line x1="2484.20" y1="48.60" x2="2476.50" y2="57.00" stroke="#fff" stroke-width="1.7"/>
<defs><clipPath id="av"><circle cx="2571" cy="46.8" r="18"/></clipPath><linearGradient id="avg" x1="0" y1="0" x2="0" y2="1"><stop offset="0" stop-color="#8fb3d6"/><stop offset="0.55" stop-color="#b9d4dc"/><stop offset="1" stop-color="#cfd8d2"/></linearGradient></defs>
<g clip-path="url(#av)"><rect x="2553" y="28.8" width="36" height="36" fill="url(#avg)"/><ellipse cx="2571" cy="66" rx="15" ry="9" fill="#d7cdbf"/><ellipse cx="2570.5" cy="45" rx="7.2" ry="9.5" fill="#c39a82"/><ellipse cx="2570.5" cy="38.5" rx="6.6" ry="3.5" fill="#b89380"/></g>
<path d="M2634.5,35.5 L2647.5,35.5 L2652.8,44.8 L2641,56.8 L2629.2,44.8 Z M2629.2,44.8 L2652.8,44.8 M2637.8,35.5 L2635.5,44.8 L2641,56.8 L2646.5,44.8 L2644.2,35.5" stroke="#fff" stroke-width="1.5" fill="none" stroke-linejoin="round"/>
<line x1="2703.00" y1="46.00" x2="2719.00" y2="46.00" stroke="#fff" stroke-width="1.3"/>
<path d="M2775.5,45 h10 a1.5,1.5 0 0 1 1.5,1.5 v8 h-10 a1.5,1.5 0 0 1 -1.5,-1.5 Z M2778.5,42 a2,2 0 0 1 2,-2 h8 a2.3,2.3 0 0 1 2.3,2.3 v8 a2,2 0 0 1 -2,2" stroke="#fff" stroke-width="1.4" fill="none"/>
<path d="M2847.5,40 L2862.5,55 M2862.5,40 L2847.5,55" stroke="#fff" stroke-width="1.5" fill="none"/>
<text x="42.60" y="113.60" font-size="19.48" fill="#ffffff" textLength="29.23" lengthAdjust="spacingAndGlyphs">File</text>
<text x="197.70" y="113.60" font-size="19.48" fill="#ffffff" textLength="47.52" lengthAdjust="spacingAndGlyphs">Insert</text>
<text x="277.00" y="113.60" font-size="19.48" fill="#ffffff" textLength="44.97" lengthAdjust="spacingAndGlyphs">Draw</text>
<text x="353.00" y="113.60" font-size="19.48" fill="#ffffff" textLength="105.52" lengthAdjust="spacingAndGlyphs">Page Layout</text>
<text x="490.60" y="113.60" font-size="19.48" fill="#ffffff" textLength="80.35" lengthAdjust="spacingAndGlyphs">Formulas</text>
<text x="600.00" y="113.60" font-size="19.48" fill="#ffffff" textLength="39.95" lengthAdjust="spacingAndGlyphs">Data</text>
<text x="671.00" y="113.60" font-size="19.48" fill="#ffffff" textLength="59.98" lengthAdjust="spacingAndGlyphs">Review</text>
<text x="762.00" y="113.60" font-size="19.48" fill="#ffffff" textLength="40.99" lengthAdjust="spacingAndGlyphs">View</text>
<text x="834.40" y="113.60" font-size="19.48" fill="#ffffff" textLength="86.61" lengthAdjust="spacingAndGlyphs">Automate</text>
<text x="951.30" y="113.60" font-size="19.48" fill="#ffffff" textLength="40.23" lengthAdjust="spacingAndGlyphs">Help</text>
<text x="111.50" y="113.60" font-size="19.48" font-weight="bold" fill="#ffffff" textLength="54.77" lengthAdjust="spacingAndGlyphs">Home</text>
<rect x="110.80" y="119.80" width="57.90" height="3.00" fill="#62b981" rx="1.5"/>
<rect x="2621.5" y="87.5" width="133.5" height="35" rx="6" fill="#262626" stroke="#5e5e5e" stroke-width="1"/>
<path d="M2630,98.3 h14.3 v10.3 h-8.6 l-4.2,4.3 v-4.3 h-1.5 Z" stroke="#fff" stroke-width="1.4" fill="none" stroke-linejoin="round"/>
<text x="2652.70" y="112.40" font-size="19.48" fill="#ffffff" textLength="92.99" lengthAdjust="spacingAndGlyphs">Comments</text>
<rect x="2768.30" y="87.00" width="104.60" height="35.80" fill="#3aa75a" rx="6"/>
<path d="M2776,104 v9.5 h15 v-4 M2780,106.5 c1,-5 4,-7 9,-7 v-3.3 l5,5.3 l-5,5.3 v-3.2 c-4,0 -7,1 -9,2.9 Z" stroke="#0c1a10" stroke-width="1.4" fill="none" stroke-linejoin="round"/>
<text x="2799.50" y="112.40" font-size="19.48" fill="#0b130d" textLength="47.47" lengthAdjust="spacingAndGlyphs">Share</text>
<path d="M2858.5,102.5 L2862.2,106.2 L2866,102.5" stroke="#0b130d" stroke-width="1.5" fill="none"/>
<rect x="23.00" y="128.00" width="2855.50" height="150.00" fill="#282828" rx="12"/>
<rect x="55.20" y="146.80" width="4.80" height="35.90" fill="#eea83a"/>
<rect x="55.20" y="146.80" width="7.80" height="4.80" fill="#eea83a"/>
<rect x="55.20" y="177.90" width="20.30" height="4.80" fill="#eea83a"/>
<rect x="81.70" y="146.80" width="5.00" height="11.20" fill="#eea83a"/>
<rect x="79.00" y="146.80" width="7.70" height="4.80" fill="#eea83a"/>
<path d="M63,152.2 V146.6 H66.8 A4.4,4.4 0 0 1 75.6,146.6 H80.2 V152.2 Z" stroke="#c8c8c8" stroke-width="1.9" fill="#282828" stroke-linejoin="round"/>
<rect x="75.9" y="160" width="19.2" height="25.3" fill="#282828" stroke="#dcdcdc" stroke-width="2"/>
<text x="51.00" y="209.70" font-size="18.75" fill="#ffffff" textLength="41.04" lengthAdjust="spacingAndGlyphs">Paste</text>
<path d="M67.0,224.7 L71.2,228.9 L75.5,224.7" stroke="#e8e8e8" stroke-width="2.0" fill="none"/>
<path d="M118.5,140.5 L128.5,157 M131.5,140.5 L121.5,157" stroke="#d0d0d0" stroke-width="1.4" fill="none"/>
<circle cx="120" cy="160" r="3" fill="none" stroke="#3f9ae0" stroke-width="1.8"/><circle cx="130" cy="160" r="3" fill="none" stroke="#3f9ae0" stroke-width="1.8"/>
<text x="142.40" y="158.60" font-size="18.75" fill="#ffffff" textLength="26.32" lengthAdjust="spacingAndGlyphs">Cut</text>
<path d="M113,180 H121 M113,180 V198 H117" stroke="#d0d0d0" stroke-width="1.6" fill="none"/>
<path d="M118,184 H128 L134,190 V202 H118 Z M128,184 V190 H134 M121,194 H130 M121,198 H130" stroke="#d0d0d0" stroke-width="1.5" fill="none" stroke-linejoin="round"/>
<text x="142.00" y="197.60" font-size="18.75" fill="#ffffff" textLength="40.99" lengthAdjust="spacingAndGlyphs">Copy</text>
<path d="M210.6,190.4 L214.8,194.6 L219.0,190.4" stroke="#e8e8e8" stroke-width="2.0" fill="none"/>
<path d="M127,226.5 L133.8,219.5" stroke="#d8d8d8" stroke-width="5" fill="none" stroke-linecap="round"/>
<path d="M127.6,225.8 L133.3,220" stroke="#282828" stroke-width="1.6" fill="none" stroke-linecap="round"/>
<path d="M112.3,228.8 Q117.5,224.2 123.6,222.4 L131.8,230.4 L122.8,239.6 Z" stroke="#f3dfa8" stroke-width="1.5" fill="#282828" stroke-linejoin="round"/>
<path d="M115.5,231.6 L122.8,238.2 L128.5,232.5 Z" stroke="none" stroke-width="1" fill="#eea83a"/>
<path d="M123.6,222.4 L131.8,230.4" stroke="#e0e0e0" stroke-width="1.6" fill="none"/>
<text x="142.40" y="236.50" font-size="18.75" fill="#ffffff" textLength="114.47" lengthAdjust="spacingAndGlyphs">Format Painter</text>
<text x="108.80" y="268.00" font-size="17.73" fill="#f0f0f0" textLength="68.21" lengthAdjust="spacingAndGlyphs">Clipboard</text>
<path d="M265.8,268.5 V258.3 H276.5 M268.5,261.0 L276,268.5 M276,263.0 V268.5 H270.5" stroke="#e0e0e0" stroke-width="1.4" fill="none"/>
<rect x="281.90" y="135.50" width="1.00" height="132.50" fill="#474747"/>
<rect x="295.5" y="146.9" width="179" height="34" rx="4.5" fill="#262626" stroke="#626262" stroke-width="1"/>
<text x="299.00" y="170.80" font-size="18.75" fill="#ffffff" textLength="62.56" lengthAdjust="spacingAndGlyphs">Tahoma</text>
<path d="M462.6,161.8 L467.1,166.2 L471.6,161.8" stroke="#e8e8e8" stroke-width="2.0" fill="none"/>
<rect x="479.5" y="146.9" width="64" height="34" rx="4.5" fill="#262626" stroke="#626262" stroke-width="1"/>
<text x="482.00" y="170.80" font-size="18.75" fill="#ffffff" textLength="9.52" lengthAdjust="spacingAndGlyphs">8</text>
<path d="M529.6,161.6 L534.5,166.4 L539.3,161.6" stroke="#e8e8e8" stroke-width="2.0" fill="none"/>
<text x="554.50" y="172.50" font-size="25.44" fill="#d8d8d8" textLength="15.93" lengthAdjust="spacingAndGlyphs">A</text>
<path d="M571.5,157.5 L574.5,153.5 L577.5,157.5" stroke="#3f9ae0" stroke-width="1.6" fill="none"/>
<text x="596.00" y="172.50" font-size="21.08" fill="#d8d8d8" textLength="13.44" lengthAdjust="spacingAndGlyphs">A</text>
<path d="M610.5,153.5 L613.5,157 L616.5,153.5" stroke="#3f9ae0" stroke-width="1.6" fill="none"/>
<text x="306.80" y="218.20" font-size="21.80" font-weight="bold" fill="#d0d0d0" textLength="12.24" lengthAdjust="spacingAndGlyphs">B</text>
<text x="344.5" y="218.2" font-family="Liberation Serif" font-style="italic" font-size="21.5" fill="#d0d0d0">I</text>
<text x="383.50" y="216.00" font-size="18.90" fill="#d0d0d0" textLength="13.54" lengthAdjust="spacingAndGlyphs">U</text>
<rect x="383.50" y="218.80" width="13.50" height="1.50" fill="#d0d0d0"/>
<path d="M415.0,208.8 L419.4,213.2 L423.7,208.8" stroke="#e8e8e8" stroke-width="2.0" fill="none"/>
<rect x="434.10" y="194.00" width="1.00" height="35.00" fill="#474747"/>
<path d="M444,201 H466 M444,201 V221 M466,201 V221 M444,211 H466 M455,201 V221" stroke="#c8c8c8" stroke-width="1.2" fill="none" stroke-dasharray="1.6,1.6"/>
<rect x="443.00" y="220.80" width="24.00" height="1.80" fill="#d0d0d0"/>
<path d="M479.7,208.7 L484.4,213.3 L489.0,208.7" stroke="#e8e8e8" stroke-width="2.0" fill="none"/>
<rect x="498.50" y="194.00" width="1.00" height="35.00" fill="#474747"/>
<path d="M520,204.5 L513.2,211.6 L519.6,217.4 L527.6,209.6 Z M520,204.5 V200.2 a2,2 0 0 1 4,0 V207.5" stroke="#d8d8d8" stroke-width="1.5" fill="none" stroke-linejoin="round"/>
<path d="M527.5,203.8 C531.5,206.5 532,210.5 530,214" stroke="#6fb3ea" stroke-width="2.2" fill="none" stroke-linecap="round"/>
<rect x="509.50" y="218.00" width="23.50" height="5.60" fill="#f5ec00"/>
<path d="M545.4,208.8 L549.7,213.2 L554.0,208.8" stroke="#e8e8e8" stroke-width="2.0" fill="none"/>
<text x="573.00" y="215.50" font-size="21.80" fill="#d8d8d8" textLength="16.43" lengthAdjust="spacingAndGlyphs">A</text>
<rect x="569.80" y="218.00" width="24.20" height="5.60" fill="#f00a0a"/>
<path d="M605.8,208.8 L610.3,213.2 L614.8,208.8" stroke="#e8e8e8" stroke-width="2.0" fill="none"/>
<text x="430.75" y="268.00" font-size="17.73" fill="#f0f0f0" textLength="30.52" lengthAdjust="spacingAndGlyphs">Font</text>
<path d="M616.8,268.5 V258.3 H627.5 M619.5,261.0 L627,268.5 M627,263.0 V268.5 H621.5" stroke="#e0e0e0" stroke-width="1.4" fill="none"/>
<rect x="633.00" y="135.50" width="1.00" height="132.50" fill="#474747"/>
<rect x="653.00" y="152.00" width="21.80" height="1.80" fill="#d0d0d0"/>
<rect x="655.90" y="157.90" width="16.00" height="1.80" fill="#d0d0d0"/>
<rect x="653.00" y="164.00" width="21.80" height="1.80" fill="#d0d0d0"/>
<rect x="685.5" y="146.5" width="35.2" height="35.2" rx="4.5" fill="#353535" stroke="#a8a8a8" stroke-width="1"/>
<rect x="692.20" y="156.10" width="21.80" height="1.80" fill="#d0d0d0"/>
<rect x="695.10" y="162.20" width="16.00" height="1.80" fill="#d0d0d0"/>
<rect x="692.20" y="168.20" width="21.80" height="1.80" fill="#d0d0d0"/>
<rect x="731.00" y="162.20" width="22.00" height="1.80" fill="#d0d0d0"/>
<rect x="734.00" y="168.20" width="16.00" height="1.80" fill="#d0d0d0"/>
<rect x="731.00" y="174.30" width="22.00" height="1.80" fill="#d0d0d0"/>
<rect x="763.00" y="145.70" width="1.00" height="36.60" fill="#474747"/>
<text x="0" y="0" font-size="15.5" fill="#d8d8d8" transform="translate(778,171.5) rotate(-52)">ab</text>
<path d="M781.5,173.5 L796,159 M789.5,158.6 H796.4 V165.5" stroke="#3f9ae0" stroke-width="1.8" fill="none"/>
<path d="M806.0,162.1 L810.2,166.3 L814.5,162.1" stroke="#e8e8e8" stroke-width="2.2" fill="none"/>
<rect x="851.00" y="144.00" width="1.00" height="94.00" fill="#474747"/>
<text x="870.80" y="162.30" font-size="14.53" fill="#d0d0d0" textLength="17.44" lengthAdjust="spacingAndGlyphs">ab</text>
<text x="870.80" y="174.40" font-size="13.50" fill="#d0d0d0" textLength="6.60" lengthAdjust="spacingAndGlyphs">c</text>
<path d="M889.8,164.5 C890.5,169 887,170.6 882,170.6 H879.8 M883.5,167 L879.8,170.6 L883.5,174.2" stroke="#3f9ae0" stroke-width="1.8" fill="none"/>
<text x="897.00" y="170.80" font-size="18.75" fill="#ffffff" textLength="78.00" lengthAdjust="spacingAndGlyphs">Wrap Text</text>
<rect x="653.00" y="201.10" width="22.00" height="1.80" fill="#d0d0d0"/>
<rect x="653.00" y="207.10" width="16.00" height="1.80" fill="#d0d0d0"/>
<rect x="653.00" y="213.10" width="22.00" height="1.80" fill="#d0d0d0"/>
<rect x="653.00" y="219.10" width="16.00" height="1.80" fill="#d0d0d0"/>
<rect x="691.40" y="201.10" width="22.00" height="1.80" fill="#d0d0d0"/>
<rect x="694.40" y="207.10" width="16.00" height="1.80" fill="#d0d0d0"/>
<rect x="691.40" y="213.10" width="22.00" height="1.80" fill="#d0d0d0"/>
<rect x="694.40" y="219.10" width="16.00" height="1.80" fill="#d0d0d0"/>
<rect x="731.00" y="201.10" width="22.00" height="1.80" fill="#d0d0d0"/>
<rect x="737.00" y="207.10" width="16.00" height="1.80" fill="#d0d0d0"/>
<rect x="731.00" y="213.10" width="22.00" height="1.80" fill="#d0d0d0"/>
<rect x="737.00" y="219.10" width="16.00" height="1.80" fill="#d0d0d0"/>
<rect x="763.00" y="193.50" width="1.00" height="37.00" fill="#474747"/>
<rect x="774.00" y="201.10" width="22.00" height="1.80" fill="#d0d0d0"/>
<rect x="774.00" y="219.10" width="22.00" height="1.80" fill="#d0d0d0"/>
<rect x="786.40" y="207.10" width="9.60" height="1.80" fill="#d0d0d0"/>
<rect x="786.40" y="213.10" width="9.60" height="1.80" fill="#d0d0d0"/>
<path d="M784,211 H775.5 M779,207.5 L775.5,211 L779,214.5" stroke="#3f9ae0" stroke-width="1.9" fill="none"/>
<rect x="813.00" y="201.10" width="22.00" height="1.80" fill="#d0d0d0"/>
<rect x="813.00" y="219.10" width="22.00" height="1.80" fill="#d0d0d0"/>
<rect x="825.00" y="207.10" width="10.00" height="1.80" fill="#d0d0d0"/>
<rect x="825.00" y="213.10" width="10.00" height="1.80" fill="#d0d0d0"/>
<path d="M813.5,211 H822.5 M819,207.5 L822.5,211 L819,214.5" stroke="#3f9ae0" stroke-width="1.9" fill="none"/>
<rect x="868" y="201.2" width="21.2" height="20.6" fill="none" stroke="#d0d0d0" stroke-width="1.8"/>
<path d="M878.4,201.2 V205 M878.4,218.4 V221.8" stroke="#d0d0d0" stroke-width="1.6" fill="none"/>
<rect x="868" y="205" width="21.2" height="13.4" fill="#1d3a52" stroke="#3f9ae0" stroke-width="1.6"/>
<path d="M871,211.5 H886.2 M874.3,208.2 L870.8,211.5 L874.3,214.8 M882.9,208.2 L886.4,211.5 L882.9,214.8" stroke="#3f9ae0" stroke-width="1.8" fill="none"/>
<text x="897.00" y="219.50" font-size="18.75" fill="#ffffff" textLength="125.58" lengthAdjust="spacingAndGlyphs">Merge &amp; Center</text>
<path d="M1049.4,210.1 L1054.2,214.9 L1059.0,210.1" stroke="#e8e8e8" stroke-width="2.0" fill="none"/>
<text x="810.00" y="268.00" font-size="17.73" fill="#f0f0f0" textLength="72.03" lengthAdjust="spacingAndGlyphs">Alignment</text>
<path d="M1066.3,268.5 V258.3 H1077.0 M1069.0,261.0 L1076.5,268.5 M1076.5,263.0 V268.5 H1071.0" stroke="#e0e0e0" stroke-width="1.4" fill="none"/>
<rect x="1083.00" y="135.50" width="1.00" height="132.50" fill="#474747"/>
<rect x="1096.5" y="146.5" width="217" height="34.5" rx="5" fill="#262626" stroke="#626262" stroke-width="1"/>
<text x="1099.00" y="170.80" font-size="18.75" fill="#ffffff" textLength="58.66" lengthAdjust="spacingAndGlyphs">General</text>
<path d="M1300.8,161.9 L1304.9,166.1 L1309.0,161.9" stroke="#e8e8e8" stroke-width="2.0" fill="none"/>
<text x="1107.40" y="219.50" font-size="24.71" fill="#d0d0d0" textLength="11.62" lengthAdjust="spacingAndGlyphs">$</text>
<path d="M1138.0,209.9 L1142.3,214.1 L1146.6,209.9" stroke="#e8e8e8" stroke-width="2.0" fill="none"/>
<text x="1164.00" y="219.50" font-size="23.26" fill="#d0d0d0" textLength="21.98" lengthAdjust="spacingAndGlyphs">%</text>
<circle cx="1214.5" cy="208.5" r="4.2" fill="#d0d0d0"/>
<path d="M1217.8,209 C1218.5,215 1215,219.5 1209.5,221.5" stroke="#d0d0d0" stroke-width="2.4" fill="none"/>
<rect x="1235.10" y="194.00" width="1.00" height="35.60" fill="#474747"/>
<path d="M1258,205 H1246 M1249.5,201.5 L1246,205 L1249.5,208.5" stroke="#3f9ae0" stroke-width="1.6" fill="none"/>
<text x="1259.00" y="210.50" font-size="12.35" fill="#d0d0d0" textLength="6.51" lengthAdjust="spacingAndGlyphs">0</text>
<text x="1248.00" y="223.50" font-size="12.35" fill="#d0d0d0" textLength="18.00" lengthAdjust="spacingAndGlyphs">.00</text>
<text x="1288.00" y="210.50" font-size="12.35" fill="#d0d0d0" textLength="18.00" lengthAdjust="spacingAndGlyphs">.00</text>
<path d="M1283.5,217.5 H1296 M1292.5,214 L1296,217.5 L1292.5,221" stroke="#3f9ae0" stroke-width="1.6" fill="none"/>
<text x="1296.50" y="223.50" font-size="12.35" fill="#d0d0d0" textLength="9.99" lengthAdjust="spacingAndGlyphs">.0</text>
<text x="1163.00" y="268.00" font-size="17.73" fill="#f0f0f0" textLength="57.63" lengthAdjust="spacingAndGlyphs">Number</text>
<path d="M1308.8,268.5 V258.3 H1319.5 M1311.5,261.0 L1319,268.5 M1319,263.0 V268.5 H1313.5" stroke="#e0e0e0" stroke-width="1.4" fill="none"/>
<rect x="1325.00" y="135.50" width="1.00" height="132.50" fill="#474747"/>
<path d="M1348,146 H1391 V178 H1348 Z M1348,156.7 H1391 M1348,167.3 H1391 M1362.3,146 V178 M1376.7,146 V178" stroke="#c8c8c8" stroke-width="1.6" fill="none"/>
<rect x="1362.00" y="157.00" width="31.00" height="10.00" fill="#2f86d6"/>
<path d="M1375,162 H1346 M1352,155.5 L1345.5,162 L1352,168.5" stroke="#3f9ae0" stroke-width="1.8" fill="none"/>
<text x="1347.50" y="209.30" font-size="18.75" fill="#ffffff" textLength="43.52" lengthAdjust="spacingAndGlyphs">Insert</text>
<path d="M1364.0,224.8 L1368.0,228.8 L1372.0,224.8" stroke="#e8e8e8" stroke-width="2.0" fill="none"/>
<path d="M1413.5,146 H1456 V178 H1413.5 Z M1413.5,156.7 H1456 M1413.5,167.3 H1456 M1427.7,146 V178 M1441.8,146 V178" stroke="#c8c8c8" stroke-width="1.6" fill="none"/>
<rect x="1414.00" y="157.00" width="26.00" height="10.00" fill="#2f86d6"/>
<path d="M1441,155.5 L1456,170 M1456,155.5 L1441,170" stroke="#e0443c" stroke-width="1.8" fill="none"/>
<text x="1409.00" y="209.30" font-size="18.75" fill="#ffffff" textLength="50.01" lengthAdjust="spacingAndGlyphs">Delete</text>
<path d="M1431.0,224.8 L1435.0,228.8 L1439.0,224.8" stroke="#e8e8e8" stroke-width="2.0" fill="none"/>
<path d="M1479.5,146 H1520.5 V178 H1479.5 Z M1479.5,156.7 H1520.5 M1479.5,167.3 H1520.5 M1493.2,146 V178 M1506.8,146 V178" stroke="#c8c8c8" stroke-width="1.6" fill="none"/>
<rect x="1489.00" y="157.00" width="22.00" height="10.00" fill="#2f86d6"/>
<path d="M1488.5,139 H1511.5 M1488.5,137 V141 M1511.5,137 V141" stroke="#3f9ae0" stroke-width="1.5" fill="none"/>
<text x="1472.60" y="207.70" font-size="18.75" fill="#ffffff" textLength="56.94" lengthAdjust="spacingAndGlyphs">Format</text>
<path d="M1496.0,222.5 L1500.0,226.5 L1504.0,222.5" stroke="#e8e8e8" stroke-width="2.0" fill="none"/>
<text x="1417.90" y="268.00" font-size="17.73" fill="#f0f0f0" textLength="32.37" lengthAdjust="spacingAndGlyphs">Cells</text>
<rect x="1543.80" y="135.50" width="1.00" height="132.50" fill="#474747"/>
<path d="M1583,145 V142 H1566.5 L1575.5,152 L1566.5,161.5 H1583 V158.5" stroke="#d0d0d0" stroke-width="1.6" fill="none" stroke-linejoin="round"/>
<text x="1593.30" y="159.40" font-size="18.75" fill="#ffffff" textLength="73.37" lengthAdjust="spacingAndGlyphs">AutoSum</text>
<path d="M1695.0,150.5 L1699.0,154.5 L1703.0,150.5" stroke="#e8e8e8" stroke-width="2.0" fill="none"/>
<rect x="1563.8" y="181" width="22.2" height="19.5" fill="none" stroke="#c8c8c8" stroke-width="1.6"/>
<rect x="1563.80" y="184.00" width="22.20" height="1.50" fill="#c8c8c8"/>
<path d="M1574.9,187 V197 M1570.5,193 L1574.9,197.5 L1579.3,193" stroke="#3f9ae0" stroke-width="1.7" fill="none"/>
<text x="1593.00" y="197.80" font-size="18.75" fill="#ffffff" textLength="20.44" lengthAdjust="spacingAndGlyphs">Fill</text>
<path d="M1620.0,188.3 L1624.4,192.7 L1628.8,188.3" stroke="#e8e8e8" stroke-width="2.0" fill="none"/>
<path d="M1564.5,232 L1575,221.5 L1585,231 L1574.5,241.5 Z" stroke="#b247c2" stroke-width="2" fill="none" stroke-linejoin="round"/>
<path d="M1564.5,232 L1569.5,227 L1579.5,236.5 L1574.5,241.5 Z" stroke="none" stroke-width="1" fill="#b247c2"/>
<text x="1593.00" y="237.20" font-size="18.75" fill="#ffffff" textLength="39.00" lengthAdjust="spacingAndGlyphs">Clear</text>
<path d="M1638.0,227.8 L1642.5,232.2 L1647.0,227.8" stroke="#e8e8e8" stroke-width="2.0" fill="none"/>
<text x="1729.60" y="160.00" font-size="25.44" fill="#3f9ae0" textLength="14.93" lengthAdjust="spacingAndGlyphs">A</text>
<path d="M1731,164.5 H1744 L1731,181 H1745" stroke="#d0d0d0" stroke-width="1.6" fill="none"/>
<path d="M1748.5,151.5 H1771.5 L1763,163 V175.5 H1757 V163 Z" stroke="#d0d0d0" stroke-width="1.6" fill="none" stroke-linejoin="round"/>
<text x="1725.00" y="207.70" font-size="18.75" fill="#ffffff" textLength="51.68" lengthAdjust="spacingAndGlyphs">Sort &amp;</text>
<text x="1724.00" y="231.80" font-size="18.75" fill="#ffffff" textLength="37.54" lengthAdjust="spacingAndGlyphs">Filter</text>
<path d="M1768.5,222.4 L1772.6,226.6 L1776.7,222.4" stroke="#e8e8e8" stroke-width="2.0" fill="none"/>
<circle cx="1826" cy="157" r="14.8" fill="none" stroke="#d0d0d0" stroke-width="1.7"/>
<line x1="1815.50" y1="167.50" x2="1799.00" y2="184.00" stroke="#d0d0d0" stroke-width="1.8"/>
<text x="1795.00" y="207.70" font-size="18.75" fill="#ffffff" textLength="53.00" lengthAdjust="spacingAndGlyphs">Find &amp;</text>
<text x="1790.50" y="231.80" font-size="18.75" fill="#ffffff" textLength="45.99" lengthAdjust="spacingAndGlyphs">Select</text>
<path d="M1842.5,222.4 L1846.7,226.6 L1850.8,222.4" stroke="#e8e8e8" stroke-width="2.0" fill="none"/>
<text x="1682.50" y="269.00" font-size="17.73" fill="#f0f0f0" textLength="47.46" lengthAdjust="spacingAndGlyphs">Editing</text>
<rect x="1867.80" y="135.50" width="1.00" height="132.50" fill="#474747"/>
<rect x="1896" y="142.2" width="40" height="40" fill="none" stroke="#cc5127" stroke-width="2.8"/>
<rect x="1900.5" y="146.7" width="13.2" height="13.2" fill="none" stroke="#cc5127" stroke-width="2"/>
<rect x="1918.3" y="146.7" width="13.2" height="13.2" fill="none" stroke="#cc5127" stroke-width="2"/>
<rect x="1900.5" y="164.5" width="13.2" height="13.2" fill="none" stroke="#cc5127" stroke-width="2"/>
<rect x="1918.3" y="164.5" width="13.2" height="13.2" fill="none" stroke="#cc5127" stroke-width="2"/>
<text x="1885.00" y="207.70" font-size="18.75" fill="#ffffff" textLength="62.01" lengthAdjust="spacingAndGlyphs">Add-ins</text>
<text x="1888.50" y="269.00" font-size="17.73" fill="#f0f0f0" textLength="53.01" lengthAdjust="spacingAndGlyphs">Add-ins</text>
<rect x="1962.90" y="135.50" width="1.00" height="132.50" fill="#474747"/>
<rect x="1989.6" y="141.6" width="40.6" height="40.6" fill="none" stroke="#c0c0c0" stroke-width="1.6"/>
<rect x="1989.60" y="141.60" width="40.60" height="4.90" fill="#9a9a9a"/>
<path d="M1989.6,154 H2030 M1989.6,166 H2030 M1989.6,176 H2030 M2001,146.5 V182 M2016,146.5 V182" stroke="#8a8a8a" stroke-width="1.2" fill="none"/>
<circle cx="2008" cy="160" r="11" fill="#282828" stroke="#d0d0d0" stroke-width="1.8"/>
<line x1="2016.00" y1="168.00" x2="2030.00" y2="182.50" stroke="#d0d0d0" stroke-width="2"/>
<rect x="2002.00" y="159.00" width="3.00" height="7.00" fill="#9a9a9a"/>
<rect x="2006.50" y="153.00" width="3.00" height="13.00" fill="#d0d0d0"/>
<rect x="2011.00" y="156.00" width="3.00" height="10.00" fill="#3f9ae0"/>
<text x="1980.00" y="207.70" font-size="18.75" fill="#ffffff" textLength="60.96" lengthAdjust="spacingAndGlyphs">Analyze</text>
<text x="1992.50" y="231.80" font-size="18.75" fill="#ffffff" textLength="36.15" lengthAdjust="spacingAndGlyphs">Data</text>
<rect x="2056.30" y="135.50" width="1.00" height="132.50" fill="#474747"/>
<circle cx="2212.4" cy="198.6" r="56.2" fill="#ffffff"/>
<rect x="2181.80" y="172.90" width="61.40" height="53.10" fill="#6266e9"/>
<rect x="2189.80" y="181.30" width="19.00" height="15.00" fill="#fff"/>
<rect x="2216.00" y="181.30" width="19.00" height="15.00" fill="#fff"/>
<rect x="2189.80" y="202.50" width="19.00" height="15.00" fill="#fff"/>
<rect x="2216.00" y="202.50" width="19.00" height="15.00" fill="#fff"/>
<text x="2295.60" y="196.50" font-size="48.55" font-weight="bold" fill="#fff" textLength="112.45" lengthAdjust="spacingAndGlyphs" stroke="#fff" stroke-width="1.8" stroke-linejoin="round">FINM</text>
<text x="2455.70" y="196.50" font-size="48.55" font-weight="bold" fill="#fff" textLength="195.40" lengthAdjust="spacingAndGlyphs" stroke="#fff" stroke-width="1.8" stroke-linejoin="round">DELSLAB</text>
<circle cx="2430.8" cy="179.9" r="13.9" fill="none" stroke="#fff" stroke-width="8.8"/>
<rect x="2421.50" y="158.00" width="18.50" height="13.00" fill="#282828"/>
<rect x="2426.00" y="154.50" width="9.80" height="27.50" fill="#fff" rx="4.9"/>
<text x="2291.92" y="237.60" font-size="36.34" fill="#fff">T</text>
<text x="2337.52" y="237.60" font-size="36.34" fill="#fff">e</text>
<text x="2382.13" y="237.60" font-size="36.34" fill="#fff">m</text>
<text x="2439.22" y="237.60" font-size="36.34" fill="#fff">p</text>
<text x="2480.80" y="237.60" font-size="36.34" fill="#fff">l</text>
<text x="2511.03" y="237.60" font-size="36.34" fill="#fff">a</text>
<text x="2555.11" y="237.60" font-size="36.34" fill="#fff">t</text>
<text x="2589.02" y="237.60" font-size="36.34" fill="#fff">e</text>
<text x="2633.72" y="237.60" font-size="36.34" fill="#fff">s</text>
<path d="M2850,253.5 L2857.2,260.5 L2864.4,253.5" stroke="#e8e8e8" stroke-width="1.6" fill="none"/>
<rect x="53.20" y="278.00" width="34.80" height="26.30" fill="#666666"/>
<rect x="53.20" y="278.00" width="0.80" height="26.30" fill="#bdbdbd"/>
<rect x="87.10" y="278.00" width="0.90" height="26.30" fill="#bdbdbd"/>
<path d="M30.3,302 L50.2,302 L50.2,282 Z" stroke="none" stroke-width="1" fill="#767676"/>
<rect x="87.50" y="278.00" width="1.00" height="26.50" fill="#4a4a4a"/>
<rect x="136.70" y="278.00" width="1.00" height="26.50" fill="#4a4a4a"/>
<rect x="406.50" y="278.00" width="1.00" height="26.50" fill="#4a4a4a"/>
<rect x="676.50" y="278.00" width="1.00" height="26.50" fill="#4a4a4a"/>
<rect x="946.70" y="278.00" width="1.00" height="26.50" fill="#4a4a4a"/>
<rect x="1152.90" y="278.00" width="1.00" height="26.50" fill="#4a4a4a"/>
<rect x="1359.10" y="278.00" width="1.00" height="26.50" fill="#4a4a4a"/>
<rect x="1565.90" y="278.00" width="1.00" height="26.50" fill="#4a4a4a"/>
<rect x="1772.90" y="278.00" width="1.00" height="26.50" fill="#4a4a4a"/>
<rect x="1941.80" y="278.00" width="1.00" height="26.50" fill="#4a4a4a"/>
<rect x="2110.80" y="278.00" width="1.00" height="26.50" fill="#4a4a4a"/>
<rect x="2279.80" y="278.00" width="1.00" height="26.50" fill="#4a4a4a"/>
<rect x="2448.90" y="278.00" width="1.00" height="26.50" fill="#4a4a4a"/>
<rect x="2617.90" y="278.00" width="1.00" height="26.50" fill="#4a4a4a"/>
<rect x="2787.00" y="278.00" width="1.00" height="26.50" fill="#4a4a4a"/>
<rect x="53.00" y="304.50" width="2807.40" height="0.80" fill="#5a5a5a"/>
<rect x="52.00" y="303.80" width="37.00" height="1.80" fill="#1e7a45"/>
<text x="63.60" y="300.10" font-size="23.40" fill="#ececec" textLength="13.74" lengthAdjust="spacingAndGlyphs">A</text>
<text x="105.75" y="300.10" font-size="23.40" fill="#ececec" textLength="13.74" lengthAdjust="spacingAndGlyphs">B</text>
<text x="264.69" y="300.10" font-size="23.40" fill="#ececec" textLength="14.87" lengthAdjust="spacingAndGlyphs">C</text>
<text x="534.59" y="300.10" font-size="23.40" fill="#ececec" textLength="14.87" lengthAdjust="spacingAndGlyphs">D</text>
<text x="805.25" y="300.10" font-size="23.40" fill="#ececec" textLength="13.74" lengthAdjust="spacingAndGlyphs">E</text>
<text x="1044.02" y="300.10" font-size="23.40" fill="#ececec" textLength="12.58" lengthAdjust="spacingAndGlyphs">F</text>
<text x="1248.47" y="300.10" font-size="23.40" fill="#ececec" textLength="16.02" lengthAdjust="spacingAndGlyphs">G</text>
<text x="1455.59" y="300.10" font-size="23.40" fill="#ececec" textLength="14.87" lengthAdjust="spacingAndGlyphs">H</text>
<text x="1667.02" y="300.10" font-size="23.40" fill="#ececec" textLength="5.72" lengthAdjust="spacingAndGlyphs">I</text>
<text x="1852.70" y="300.10" font-size="23.40" fill="#ececec" textLength="10.30" lengthAdjust="spacingAndGlyphs">J</text>
<text x="2019.95" y="300.10" font-size="23.40" fill="#ececec" textLength="13.74" lengthAdjust="spacingAndGlyphs">K</text>
<text x="2190.09" y="300.10" font-size="23.40" fill="#ececec" textLength="11.45" lengthAdjust="spacingAndGlyphs">L</text>
<text x="2356.25" y="300.10" font-size="23.40" fill="#ececec" textLength="17.15" lengthAdjust="spacingAndGlyphs">M</text>
<text x="2526.49" y="300.10" font-size="23.40" fill="#ececec" textLength="14.87" lengthAdjust="spacingAndGlyphs">N</text>
<text x="2694.92" y="300.10" font-size="23.40" fill="#ececec" textLength="16.02" lengthAdjust="spacingAndGlyphs">O</text>
<rect x="11.00" y="305.00" width="41.50" height="50.00" fill="#666666"/>
<rect x="11.00" y="305.00" width="41.50" height="1.00" fill="#c8c8c8"/>
<rect x="11.00" y="354.00" width="41.50" height="1.00" fill="#c8c8c8"/>
<rect x="52.00" y="304.50" width="1.70" height="51.00" fill="#1e7a45"/>
<text x="26.06" y="349.20" font-size="22.53" fill="#dedede" textLength="11.90" lengthAdjust="spacingAndGlyphs">1</text>
<rect x="11.00" y="396.00" width="42.00" height="1.00" fill="#6a6a6a"/>
<text x="26.06" y="390.60" font-size="22.53" fill="#dedede" textLength="11.90" lengthAdjust="spacingAndGlyphs">2</text>
<rect x="11.00" y="423.00" width="42.00" height="1.00" fill="#6a6a6a"/>
<text x="26.06" y="418.30" font-size="22.53" fill="#dedede" textLength="11.90" lengthAdjust="spacingAndGlyphs">3</text>
<rect x="11.00" y="456.00" width="42.00" height="1.00" fill="#6a6a6a"/>
<text x="26.06" y="450.80" font-size="22.53" fill="#dedede" textLength="11.90" lengthAdjust="spacingAndGlyphs">4</text>
<rect x="11.00" y="486.00" width="42.00" height="1.00" fill="#6a6a6a"/>
<text x="26.06" y="480.50" font-size="22.53" fill="#dedede" textLength="11.90" lengthAdjust="spacingAndGlyphs">6</text>
<rect x="11.00" y="512.00" width="42.00" height="1.00" fill="#6a6a6a"/>
<text x="26.06" y="506.50" font-size="22.53" fill="#dedede" textLength="11.90" lengthAdjust="spacingAndGlyphs">7</text>
<rect x="11.00" y="542.00" width="42.00" height="1.00" fill="#6a6a6a"/>
<text x="20.12" y="536.60" font-size="22.53" fill="#dedede" textLength="23.81" lengthAdjust="spacingAndGlyphs">13</text>
<rect x="11.00" y="590.00" width="42.00" height="1.00" fill="#6a6a6a"/>
<text x="20.12" y="585.20" font-size="22.53" fill="#dedede" textLength="23.81" lengthAdjust="spacingAndGlyphs">14</text>
<rect x="11.00" y="616.00" width="42.00" height="1.00" fill="#6a6a6a"/>
<text x="20.12" y="610.80" font-size="22.53" fill="#dedede" textLength="23.81" lengthAdjust="spacingAndGlyphs">15</text>
<rect x="11.00" y="651.00" width="42.00" height="1.00" fill="#6a6a6a"/>
<text x="20.12" y="645.80" font-size="22.53" fill="#dedede" textLength="23.81" lengthAdjust="spacingAndGlyphs">16</text>
<rect x="11.00" y="680.00" width="42.00" height="1.00" fill="#6a6a6a"/>
<text x="20.12" y="674.60" font-size="22.53" fill="#dedede" textLength="23.81" lengthAdjust="spacingAndGlyphs">17</text>
<rect x="11.00" y="708.00" width="42.00" height="1.00" fill="#6a6a6a"/>
<text x="20.12" y="702.60" font-size="22.53" fill="#dedede" textLength="23.81" lengthAdjust="spacingAndGlyphs">18</text>
<rect x="11.00" y="736.00" width="42.00" height="1.00" fill="#6a6a6a"/>
<text x="20.12" y="730.60" font-size="22.53" fill="#dedede" textLength="23.81" lengthAdjust="spacingAndGlyphs">19</text>
<rect x="11.00" y="764.00" width="42.00" height="1.00" fill="#6a6a6a"/>
<text x="20.12" y="758.60" font-size="22.53" fill="#dedede" textLength="23.81" lengthAdjust="spacingAndGlyphs">20</text>
<rect x="11.00" y="792.00" width="42.00" height="1.00" fill="#6a6a6a"/>
<text x="20.12" y="786.60" font-size="22.53" fill="#dedede" textLength="23.81" lengthAdjust="spacingAndGlyphs">21</text>
<rect x="11.00" y="820.00" width="42.00" height="1.00" fill="#6a6a6a"/>
<text x="20.12" y="814.60" font-size="22.53" fill="#dedede" textLength="23.81" lengthAdjust="spacingAndGlyphs">22</text>
<rect x="11.00" y="848.00" width="42.00" height="1.00" fill="#6a6a6a"/>
<text x="20.12" y="842.60" font-size="22.53" fill="#dedede" textLength="23.81" lengthAdjust="spacingAndGlyphs">23</text>
<rect x="11.00" y="876.00" width="42.00" height="1.00" fill="#6a6a6a"/>
<text x="20.12" y="870.60" font-size="22.53" fill="#dedede" textLength="23.81" lengthAdjust="spacingAndGlyphs">24</text>
<rect x="11.00" y="904.00" width="42.00" height="1.00" fill="#6a6a6a"/>
<text x="20.12" y="898.60" font-size="22.53" fill="#dedede" textLength="23.81" lengthAdjust="spacingAndGlyphs">25</text>
<rect x="11.00" y="932.00" width="42.00" height="1.00" fill="#6a6a6a"/>
<text x="20.12" y="926.60" font-size="22.53" fill="#dedede" textLength="23.81" lengthAdjust="spacingAndGlyphs">26</text>
<rect x="11.00" y="960.00" width="42.00" height="1.00" fill="#6a6a6a"/>
<text x="20.12" y="954.60" font-size="22.53" fill="#dedede" textLength="23.81" lengthAdjust="spacingAndGlyphs">27</text>
<rect x="11.00" y="988.00" width="42.00" height="1.00" fill="#6a6a6a"/>
<text x="20.12" y="982.60" font-size="22.53" fill="#dedede" textLength="23.81" lengthAdjust="spacingAndGlyphs">28</text>
<rect x="11.00" y="1016.00" width="42.00" height="1.00" fill="#6a6a6a"/>
<text x="20.12" y="1010.60" font-size="22.53" fill="#dedede" textLength="23.81" lengthAdjust="spacingAndGlyphs">29</text>
<rect x="11.00" y="1044.00" width="42.00" height="1.00" fill="#6a6a6a"/>
<text x="20.12" y="1038.60" font-size="22.53" fill="#dedede" textLength="23.81" lengthAdjust="spacingAndGlyphs">30</text>
<rect x="11.00" y="1072.00" width="42.00" height="1.00" fill="#6a6a6a"/>
<text x="20.12" y="1066.60" font-size="22.53" fill="#dedede" textLength="23.81" lengthAdjust="spacingAndGlyphs">31</text>
<rect x="11.00" y="1100.00" width="42.00" height="1.00" fill="#6a6a6a"/>
<text x="20.12" y="1094.60" font-size="22.53" fill="#dedede" textLength="23.81" lengthAdjust="spacingAndGlyphs">32</text>
<rect x="11.00" y="1128.00" width="42.00" height="1.00" fill="#6a6a6a"/>
<text x="20.12" y="1122.60" font-size="22.53" fill="#dedede" textLength="23.81" lengthAdjust="spacingAndGlyphs">33</text>
<rect x="11.00" y="1156.00" width="42.00" height="1.00" fill="#6a6a6a"/>
<text x="20.12" y="1150.60" font-size="22.53" fill="#dedede" textLength="23.81" lengthAdjust="spacingAndGlyphs">34</text>
<rect x="11.00" y="1184.00" width="42.00" height="1.00" fill="#6a6a6a"/>
<text x="20.12" y="1178.60" font-size="22.53" fill="#dedede" textLength="23.81" lengthAdjust="spacingAndGlyphs">35</text>
<rect x="11.00" y="1212.00" width="42.00" height="1.00" fill="#6a6a6a"/>
<text x="20.12" y="1206.60" font-size="22.53" fill="#dedede" textLength="23.81" lengthAdjust="spacingAndGlyphs">36</text>
<rect x="11.00" y="1247.00" width="42.00" height="1.00" fill="#6a6a6a"/>
<text x="20.12" y="1241.80" font-size="22.53" fill="#dedede" textLength="23.81" lengthAdjust="spacingAndGlyphs">37</text>
<rect x="11.00" y="1275.00" width="42.00" height="1.00" fill="#6a6a6a"/>
<text x="20.12" y="1269.80" font-size="22.53" fill="#dedede" textLength="23.81" lengthAdjust="spacingAndGlyphs">38</text>
<rect x="11.00" y="1303.00" width="42.00" height="1.00" fill="#6a6a6a"/>
<text x="20.12" y="1297.90" font-size="22.53" fill="#dedede" textLength="23.81" lengthAdjust="spacingAndGlyphs">39</text>
<rect x="11.00" y="1345.00" width="42.00" height="1.00" fill="#6a6a6a"/>
<text x="20.12" y="1339.60" font-size="22.53" fill="#dedede" textLength="23.81" lengthAdjust="spacingAndGlyphs">40</text>
<rect x="11.00" y="1373.00" width="42.00" height="1.00" fill="#6a6a6a"/>
<text x="20.12" y="1367.70" font-size="22.53" fill="#dedede" textLength="23.81" lengthAdjust="spacingAndGlyphs">41</text>
<rect x="11.00" y="1401.00" width="42.00" height="1.00" fill="#6a6a6a"/>
<text x="20.12" y="1395.80" font-size="22.53" fill="#dedede" textLength="23.81" lengthAdjust="spacingAndGlyphs">42</text>
<rect x="11.00" y="1429.00" width="42.00" height="1.00" fill="#6a6a6a"/>
<text x="20.12" y="1423.90" font-size="22.53" fill="#dedede" textLength="23.81" lengthAdjust="spacingAndGlyphs">43</text>
<rect x="11.00" y="1457.00" width="42.00" height="1.00" fill="#6a6a6a"/>
<text x="20.12" y="1451.70" font-size="22.53" fill="#dedede" textLength="23.81" lengthAdjust="spacingAndGlyphs">44</text>
<rect x="11.00" y="1485.00" width="42.00" height="1.00" fill="#6a6a6a"/>
<text x="20.12" y="1479.80" font-size="22.53" fill="#dedede" textLength="23.81" lengthAdjust="spacingAndGlyphs">45</text>
<rect x="11.00" y="1527.00" width="42.00" height="1.00" fill="#6a6a6a"/>
<text x="20.12" y="1521.40" font-size="22.53" fill="#dedede" textLength="23.81" lengthAdjust="spacingAndGlyphs">46</text>
<rect x="11.00" y="1555.00" width="42.00" height="1.00" fill="#6a6a6a"/>
<text x="20.12" y="1549.80" font-size="22.53" fill="#dedede" textLength="23.81" lengthAdjust="spacingAndGlyphs">47</text>
<rect x="11.00" y="1582.00" width="42.00" height="1.00" fill="#6a6a6a"/>
<text x="20.12" y="1577.30" font-size="22.53" fill="#dedede" textLength="23.81" lengthAdjust="spacingAndGlyphs">48</text>
<rect x="11.00" y="1611.00" width="42.00" height="1.00" fill="#6a6a6a"/>
<text x="20.12" y="1605.70" font-size="22.53" fill="#dedede" textLength="23.81" lengthAdjust="spacingAndGlyphs">49</text>
<rect x="11.00" y="1652.00" width="42.00" height="1.00" fill="#6a6a6a"/>
<text x="20.12" y="1647.20" font-size="22.53" fill="#dedede" textLength="23.81" lengthAdjust="spacingAndGlyphs">50</text>
<rect x="11.00" y="459.60" width="42.00" height="1.00" fill="#6a6a6a"/>
<rect x="11.00" y="514.80" width="42.00" height="1.00" fill="#6a6a6a"/>
<rect x="11.00" y="1669.50" width="42.00" height="1.00" fill="#6a6a6a"/>
<rect x="2862.50" y="279.50" width="26.00" height="1389.00" fill="#161616" rx="13"/>
<path d="M2869.3,295.8 L2882.5,295.8 L2875.9,286.2 Z" stroke="none" stroke-width="1" fill="#9c9c9c" stroke="#9c9c9c" stroke-width="1.2" stroke-linejoin="round"/>
<rect x="2870.00" y="304.00" width="12.00" height="1310.70" fill="#9c9c9c" rx="6"/>
<path d="M2869.3,1654.2 L2882.7,1654.2 L2876,1663.8 Z" stroke="none" stroke-width="1" fill="#9c9c9c" stroke="#9c9c9c" stroke-width="1.2" stroke-linejoin="round"/>
<path d="M54.5,1685.5 L46.2,1693 L54.5,1700.5" stroke="#8c8c8c" stroke-width="1.5" fill="none"/>
<path d="M95,1685.5 L103.5,1693 L95,1700.5" stroke="#8c8c8c" stroke-width="1.5" fill="none"/>
<text x="189.95" y="1702.60" font-size="20.64" fill="#ffffff" textLength="82.45" lengthAdjust="spacingAndGlyphs">Contents</text>
<rect x="299.00" y="1676.00" width="127.70" height="35.70" fill="#ffed66" rx="5.5"/>
<text x="314.91" y="1702.60" font-size="20.64" fill="#1b1b1b" textLength="95.93" lengthAdjust="spacingAndGlyphs">Dashboard</text>
<rect x="440.30" y="1676.00" width="105.70" height="35.70" fill="#ffed66" rx="5.5"/>
<text x="453.89" y="1702.60" font-size="20.64" fill="#1b1b1b" textLength="78.49" lengthAdjust="spacingAndGlyphs">Revenue</text>
<rect x="559.00" y="1676.00" width="158.20" height="35.70" fill="#ffed66" rx="5.5"/>
<text x="570.01" y="1702.60" font-size="20.64" fill="#1b1b1b" textLength="136.20" lengthAdjust="spacingAndGlyphs">COGS &amp; OPEX</text>
<rect x="730.00" y="1676.00" width="89.00" height="35.70" fill="#ffed66" rx="5.5"/>
<text x="744.55" y="1702.60" font-size="20.64" fill="#1b1b1b" textLength="59.94" lengthAdjust="spacingAndGlyphs">Payroll</text>
<path d="M826,1670 Q832,1670 832,1676 V1706 Q832,1712 838,1712 H913 Q919,1712 919,1706 V1676 Q919,1670 925,1670 Z" stroke="none" stroke-width="1" fill="#fdfcf3"/>
<text x="842.05" y="1697.80" font-size="21.22" fill="#1e1e1e" textLength="66.91" lengthAdjust="spacingAndGlyphs" stroke="#1e1e1e" stroke-width="0.5">CAPEX</text>
<rect x="844.50" y="1705.00" width="62.20" height="2.40" fill="#1d7a3d" rx="1"/>
<rect x="932.30" y="1676.00" width="112.50" height="35.70" fill="#ffed66" rx="5.5"/>
<text x="947.13" y="1702.60" font-size="20.64" fill="#1b1b1b" textLength="82.85" lengthAdjust="spacingAndGlyphs">CapTable</text>
<rect x="1058.00" y="1676.00" width="89.60" height="35.70" fill="#ffed66" rx="5.5"/>
<text x="1072.26" y="1702.60" font-size="20.64" fill="#1b1b1b" textLength="61.04" lengthAdjust="spacingAndGlyphs">Capital</text>
<rect x="1161.30" y="1676.00" width="41.20" height="35.70" fill="#4ab1e5" rx="5.5"/>
<text x="1172.64" y="1702.60" font-size="20.64" fill="#1b1b1b" textLength="18.53" lengthAdjust="spacingAndGlyphs">IS</text>
<rect x="1216.00" y="1676.00" width="47.60" height="35.70" fill="#4ab1e5" rx="5.5"/>
<text x="1226.71" y="1702.60" font-size="20.64" fill="#1b1b1b" textLength="26.14" lengthAdjust="spacingAndGlyphs">CF</text>
<rect x="1277.20" y="1676.00" width="47.50" height="35.70" fill="#4ab1e5" rx="5.5"/>
<text x="1287.86" y="1702.60" font-size="20.64" fill="#1b1b1b" textLength="26.16" lengthAdjust="spacingAndGlyphs">BS</text>
<rect x="1338.30" y="1676.00" width="114.20" height="35.70" fill="#4ab1e5" rx="5.5"/>
<text x="1351.82" y="1702.60" font-size="20.64" fill="#1b1b1b" textLength="87.19" lengthAdjust="spacingAndGlyphs">Scenarios</text>
<rect x="1466.00" y="1676.00" width="114.30" height="35.70" fill="#4ab1e5" rx="5.5"/>
<text x="1483.00" y="1702.60" font-size="20.64" fill="#1b1b1b" textLength="80.31" lengthAdjust="spacingAndGlyphs">Valuation</text>
<rect x="1594.00" y="1676.00" width="113.60" height="35.70" fill="#4ab1e5" rx="5.5"/>
<text x="1608.84" y="1702.60" font-size="20.64" fill="#1b1b1b" textLength="83.89" lengthAdjust="spacingAndGlyphs">Summary</text>
<rect x="1721.00" y="1676.00" width="47.70" height="35.70" fill="#4ab1e5" rx="5.5"/>
<text x="1731.76" y="1702.60" font-size="20.64" fill="#1b1b1b" textLength="26.16" lengthAdjust="spacingAndGlyphs">BE</text>
<rect x="1782.00" y="1676.00" width="71.70" height="35.70" fill="#4ab1e5" rx="5.5"/>
<text x="1793.34" y="1702.60" font-size="20.64" fill="#1b1b1b" textLength="49.02" lengthAdjust="spacingAndGlyphs">ROIC</text>
<rect x="1867.00" y="1676.00" width="85.00" height="35.70" fill="#4ab1e5" rx="5.5"/>
<text x="1880.63" y="1702.60" font-size="20.64" fill="#1b1b1b" textLength="57.75" lengthAdjust="spacingAndGlyphs">Charts</text>
<rect x="1965.00" y="1676.00" width="63.60" height="35.70" fill="#4ab1e5" rx="5.5"/>
<text x="1976.11" y="1702.60" font-size="20.64" fill="#1b1b1b" textLength="41.41" lengthAdjust="spacingAndGlyphs">KPIs</text>
<defs><clipPath id="scc"><rect x="2042" y="1676" width="30.5" height="36"/></clipPath></defs>
<g clip-path="url(#scc)">
<rect x="2042.00" y="1676.00" width="58.00" height="35.70" fill="#4ab1e5" rx="5.5"/>
<text x="2053.80" y="1702.60" font-size="20.64" fill="#1b1b1b" textLength="87.19" lengthAdjust="spacingAndGlyphs">Scenarios</text>
</g>
<rect x="291.70" y="1680.00" width="1.00" height="27.70" fill="#5c5c5c"/>
<rect x="432.80" y="1680.00" width="1.00" height="27.70" fill="#5c5c5c"/>
<rect x="552.10" y="1680.00" width="1.00" height="27.70" fill="#5c5c5c"/>
<rect x="723.30" y="1680.00" width="1.00" height="27.70" fill="#5c5c5c"/>
<rect x="825.10" y="1680.00" width="1.00" height="27.70" fill="#5c5c5c"/>
<rect x="925.10" y="1680.00" width="1.00" height="27.70" fill="#5c5c5c"/>
<rect x="1050.90" y="1680.00" width="1.00" height="27.70" fill="#5c5c5c"/>
<rect x="1153.70" y="1680.00" width="1.00" height="27.70" fill="#5c5c5c"/>
<rect x="1208.60" y="1680.00" width="1.00" height="27.70" fill="#5c5c5c"/>
<rect x="1269.70" y="1680.00" width="1.00" height="27.70" fill="#5c5c5c"/>
<rect x="1330.80" y="1680.00" width="1.00" height="27.70" fill="#5c5c5c"/>
<rect x="1458.60" y="1680.00" width="1.00" height="27.70" fill="#5c5c5c"/>
<rect x="1586.40" y="1680.00" width="1.00" height="27.70" fill="#5c5c5c"/>
<rect x="1713.70" y="1680.00" width="1.00" height="27.70" fill="#5c5c5c"/>
<rect x="1774.80" y="1680.00" width="1.00" height="27.70" fill="#5c5c5c"/>
<rect x="1859.80" y="1680.00" width="1.00" height="27.70" fill="#5c5c5c"/>
<rect x="1958.10" y="1680.00" width="1.00" height="27.70" fill="#5c5c5c"/>
<rect x="2034.70" y="1680.00" width="1.00" height="27.70" fill="#5c5c5c"/>
<circle cx="2088.2" cy="1692.4" r="2.1" fill="#f0f0f0"/>
<circle cx="2095" cy="1692.4" r="2.1" fill="#f0f0f0"/>
<circle cx="2101.8" cy="1692.4" r="2.1" fill="#f0f0f0"/>
<path d="M2143.5,1684.5 V1701 M2135.3,1692.7 H2151.8" stroke="#f0f0f0" stroke-width="1.6" fill="none"/>
<circle cx="2192.3" cy="1686.5" r="1.9" fill="#f0f0f0"/>
<circle cx="2192.3" cy="1692.7" r="1.9" fill="#f0f0f0"/>
<circle cx="2192.3" cy="1699" r="1.9" fill="#f0f0f0"/>
<rect x="2215.00" y="1680.00" width="645.00" height="26.50" fill="#161616" rx="13"/>
<path d="M2233.3,1687.3 L2233.3,1698 L2224.5,1692.6 Z" stroke="none" stroke-width="1" fill="#9c9c9c" stroke="#9c9c9c" stroke-width="1" stroke-linejoin="round"/>
<rect x="2242.00" y="1686.80" width="55.00" height="12.20" fill="#9c9c9c" rx="6"/>
<path d="M2843.5,1686.5 L2843.5,1699.5 L2852.8,1693 Z" stroke="none" stroke-width="1" fill="#9c9c9c" stroke="#9c9c9c" stroke-width="1" stroke-linejoin="round"/>
<rect x="11.00" y="1718.00" width="2879.50" height="33.00" fill="#141414"/>
<rect x="11.00" y="1718.00" width="2879.50" height="1.00" fill="#363636"/>
<text x="27.40" y="1741.20" font-size="17.44" fill="#f0f0f0" textLength="42.61" lengthAdjust="spacingAndGlyphs">Ready</text>
<rect x="100" y="1726.5" width="20.5" height="16" fill="none" stroke="#f0f0f0" stroke-width="1.4"/>
<path d="M100,1730 H120.5 M103,1734 H108 M103,1738 H107" stroke="#f0f0f0" stroke-width="1.3" fill="none"/>
<circle cx="114" cy="1739.3" r="5.2" fill="#141414" stroke="#f0f0f0" stroke-width="1.4"/><circle cx="114" cy="1739.3" r="2.2" fill="#f0f0f0"/>
<circle cx="155.5" cy="1727.8" r="2.4" fill="none" stroke="#f0f0f0" stroke-width="1.3"/>
<path d="M147,1731 L155.5,1733.5 L164,1731 M155.5,1733.5 L152.5,1746 M155.5,1733.5 L157,1740 M159,1739.5 L167,1746.5 M167,1739.5 L159,1746.5" stroke="#f0f0f0" stroke-width="1.4" fill="none"/>
<text x="173.50" y="1741.20" font-size="17.44" font-weight="bold" fill="#f4f4f4" textLength="187.29" lengthAdjust="spacingAndGlyphs">Accessibility: Investigate</text>
<rect x="2445.00" y="1719.00" width="60.00" height="31.50" fill="#262626"/>
<path d="M2464.5,1725 H2484 V1743.5 H2464.5 Z M2464.5,1731.3 H2484 M2464.5,1737.3 H2484 M2471,1725 V1743.5 M2477.5,1725 V1743.5" stroke="#f4f4f4" stroke-width="1.6" fill="none"/>
<path d="M2524.5,1725 H2545.5 V1743.5 H2524.5 Z M2528.5,1729 H2541.5 V1739.5 H2528.5 Z M2531,1732 H2539 M2531,1735 H2539" stroke="#f4f4f4" stroke-width="1.5" fill="none"/>
<path d="M2584.5,1725 H2605.5 V1743.5 H2584.5 Z M2591,1725 V1734.5 H2596.5 V1725" stroke="#f4f4f4" stroke-width="1.6" fill="none"/>
<rect x="2633.00" y="1734.00" width="11.50" height="1.40" fill="#d8d8d8"/>
<rect x="2652.60" y="1734.00" width="148.40" height="2.20" fill="#b8b8b8"/>
<rect x="2726.30" y="1730.50" width="1.50" height="9.50" fill="#b8b8b8"/>
<rect x="2733.00" y="1726.00" width="8.00" height="17.00" fill="#c4c4c4"/>
<path d="M2808.5,1734.8 H2820.7 M2814.6,1728.7 V1741" stroke="#e0e0e0" stroke-width="1.4" fill="none"/>
<text x="2840.00" y="1740.70" font-size="15.55" fill="#f0f0f0" textLength="38.96" lengthAdjust="spacingAndGlyphs">140%</text>
</svg></body></html>
